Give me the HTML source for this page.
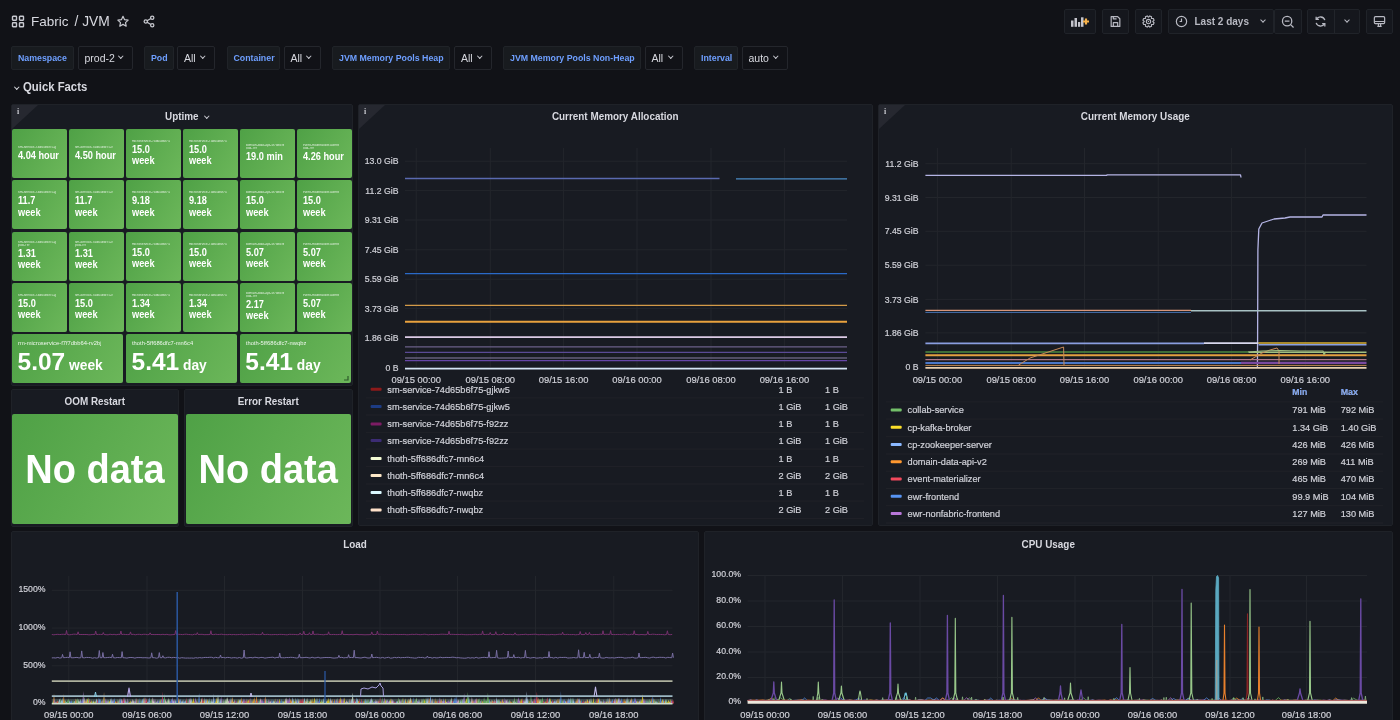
<!DOCTYPE html><html><head><meta charset="utf-8"><style>
*{box-sizing:border-box;margin:0;padding:0}
html,body{width:1400px;height:720px;overflow:hidden;background:#111217;}
.wrap{position:absolute;left:0;top:0;width:1400px;height:720px;will-change:transform;font-family:"Liberation Sans",sans-serif;color:#ccccdc}
.a{position:absolute}
.t{white-space:nowrap;line-height:1}
.panel{position:absolute;background:#181b22;border:1px solid #1f2228;border-radius:2px}
.ptitle{position:absolute;left:0;right:0;text-align:center;font-weight:bold;font-size:10.6px;color:#d8d9e0;white-space:nowrap;line-height:1;transform:scaleX(.934)}
.btn{position:absolute;top:9px;height:25px;background:#15171d;border:1px solid #202329;border-radius:2px}
.vlab{position:absolute;top:45.5px;height:24px;background:#181b1f;border:1px solid #202328;border-radius:2px;color:#6e9fff;font-weight:bold;font-size:8.8px;line-height:22px;white-space:nowrap}
.vval{position:absolute;top:45.5px;height:24px;background:#111217;border:1px solid #24262c;border-radius:2px;color:#d8d9e0;font-size:10.5px;line-height:22px;white-space:nowrap}
.chev{display:inline-block;width:4px;height:4px;border-right:1.2px solid #c8c9d0;border-bottom:1.2px solid #c8c9d0;transform:rotate(45deg);position:absolute}
.tile{position:absolute;border-radius:2px;background:linear-gradient(120deg,#4fa146,#6cb75a);overflow:hidden}
.tl{position:absolute;left:6px;font-size:3.4px;color:rgba(255,255,255,.8);white-space:nowrap;line-height:1;max-width:38px;overflow:hidden}
.tv{position:absolute;left:6px;font-size:10px;font-weight:bold;color:#fff;line-height:11.5px;white-space:nowrap;transform:scaleX(.92);transform-origin:0 0}
.info{position:absolute;left:0;top:0;width:0;height:0;border-top:24px solid #262830;border-right:26px solid transparent}
.infoi{position:absolute;left:5px;top:3px;font-size:8px;font-family:"Liberation Serif",serif;font-weight:bold;color:#c8c9d0;line-height:1}
.ax{position:absolute;font-size:8.7px;color:#d0d1d8;white-space:nowrap;line-height:1;-webkit-text-stroke:.2px #d0d1d8}
.xl{position:absolute;font-size:9.4px;color:#d0d1d8;-webkit-text-stroke:.2px #d0d1d8;white-space:nowrap;line-height:1;transform:translateX(-50%)}
.lg{position:absolute;font-size:9.2px;color:#d0d1d8;-webkit-text-stroke:.2px #d0d1d8;white-space:nowrap;line-height:1}
</style></head><body><div class="wrap">
<svg class="a" style="left:11px;top:15px" width="14" height="13" viewBox="0 0 14 13">
<g fill="none" stroke="#c8c9d0" stroke-width="1.4"><rect x="1.5" y="1.2" width="4" height="4" rx=".6"/><rect x="8.5" y="1.2" width="4" height="4" rx=".6"/><rect x="1.5" y="7.8" width="4" height="4" rx=".6"/><rect x="8.5" y="7.8" width="4" height="4" rx=".6"/></g></svg>
<div class="a t" style="left:31px;top:14.5px;font-size:13.5px;color:#d8d9e0">Fabric</div>
<div class="a t" style="left:74.5px;top:14.5px;font-size:13.8px;color:#d8d9e0">/ JVM</div>
<svg class="a" style="left:116px;top:15px" width="14" height="13" viewBox="0 0 24 24"><path d="M12 2.5l2.9 6.1 6.6.8-4.9 4.6 1.3 6.6L12 17.3l-5.9 3.3 1.3-6.6L2.5 9.4l6.6-.8z" fill="none" stroke="#c8c9d0" stroke-width="2.2" stroke-linejoin="round"/></svg>
<svg class="a" style="left:142px;top:15px" width="14" height="13" viewBox="0 0 24 24"><g fill="none" stroke="#c8c9d0" stroke-width="2.3"><circle cx="18" cy="5" r="3"/><circle cx="6" cy="12" r="3"/><circle cx="18" cy="19" r="3"/><path d="M8.6 13.5l6.8 4M15.4 6.5l-6.8 4"/></g></svg>
<div class="btn" style="left:1064px;width:32px"></div>
<svg class="a" style="left:1070px;top:14px" width="22" height="15" viewBox="0 0 22 15">
<g fill="#c4c4cc"><rect x="1" y="6.5" width="2.5" height="6.3"/><rect x="4.5" y="4" width="2.5" height="8.8"/><rect x="8" y="8" width="2.2" height="4.8"/><rect x="11" y="3.3" width="2.5" height="9.5"/></g>
<path d="M16 4.5v6M13 7.5h6" stroke="#f7b24a" stroke-width="2.2"/></svg>
<div class="btn" style="left:1102px;width:27px"></div>
<svg class="a" style="left:1109px;top:15px" width="13" height="13" viewBox="0 0 24 24"><g fill="none" stroke="#b8b9c2" stroke-width="2.2" stroke-linejoin="round"><path d="M4 3h12l4 4v14H4z"/><path d="M8 21v-7h8v7M8 3v4h6"/></g></svg>
<div class="btn" style="left:1135px;width:27px"></div>
<svg class="a" style="left:1142px;top:15px" width="13" height="13" viewBox="0 0 24 24"><g fill="none" stroke="#b8b9c2" stroke-width="2" stroke-linejoin="round"><circle cx="12" cy="12" r="4"/><path d="M19.90 12.26 L22.34 14.34 L20.97 17.65 L17.77 17.40 L17.40 17.77 L17.65 20.97 L14.34 22.34 L12.26 19.90 L11.74 19.90 L9.66 22.34 L6.35 20.97 L6.60 17.77 L6.23 17.40 L3.03 17.65 L1.66 14.34 L4.10 12.26 L4.10 11.74 L1.66 9.66 L3.03 6.35 L6.23 6.60 L6.60 6.23 L6.35 3.03 L9.66 1.66 L11.74 4.10 L12.26 4.10 L14.34 1.66 L17.65 3.03 L17.40 6.23 L17.77 6.60 L20.97 6.35 L22.34 9.66 L19.90 11.74Z"/></g><circle cx="12" cy="12" r="1.3" fill="#b8b9c2"/></svg>
<div class="btn" style="left:1168px;width:106px"></div>
<svg class="a" style="left:1175px;top:15px" width="13" height="13" viewBox="0 0 24 24"><g fill="none" stroke="#b8b9c2" stroke-width="2.2"><circle cx="12" cy="12" r="9.5"/><path d="M12 6.5V12H8.5"/></g></svg>
<div class="a t" style="left:1194.5px;top:16.5px;font-size:10px;font-weight:bold;color:#b8b9c2">Last 2 days</div>
<span class="chev" style="left:1261px;top:18px;border-color:#b8b9c2"></span>
<div class="btn" style="left:1274px;width:28px"></div>
<svg class="a" style="left:1281px;top:15px" width="14" height="14" viewBox="0 0 24 24"><g fill="none" stroke="#b8b9c2" stroke-width="2.2"><circle cx="10.5" cy="10.5" r="8"/><path d="M16.5 16.5l5 5M6.5 10.5h8"/></g></svg>
<div class="btn" style="left:1307px;width:53px"></div>
<div class="a" style="left:1334px;top:10px;width:1px;height:23px;background:#22252b"></div>
<svg class="a" style="left:1314px;top:15px" width="13" height="13" viewBox="0 0 24 24"><g fill="none" stroke="#b8b9c2" stroke-width="2.4"><path d="M20 9.5A8.5 8.5 0 0 0 4.5 8M4 14.5A8.5 8.5 0 0 0 19.5 16"/><path d="M4 3v5h5M20 21v-5h-5"/></g></svg>
<span class="chev" style="left:1345px;top:18px;border-color:#b8b9c2"></span>
<div class="btn" style="left:1366px;width:27px"></div>
<svg class="a" style="left:1373px;top:15px" width="13" height="13" viewBox="0 0 24 24"><g fill="none" stroke="#b8b9c2" stroke-width="2.2"><rect x="2.5" y="3" width="19" height="13" rx="2"/><path d="M2.5 12h19M8 21h8M10 16v5M14 16v5"/></g></svg>
<div class="vlab" style="left:11px;width:63px;padding-left:6px">Namespace</div>
<div class="vval" style="left:77.5px;width:55.5px;padding-left:6px">prod-2</div>
<span class="chev" style="left:119.0px;top:54px;width:3.5px;height:3.5px"></span>
<div class="vlab" style="left:144px;width:30px;padding-left:6px">Pod</div>
<div class="vval" style="left:177px;width:38px;padding-left:6px">All</div>
<span class="chev" style="left:201px;top:54px;width:3.5px;height:3.5px"></span>
<div class="vlab" style="left:226.5px;width:53px;padding-left:6px">Container</div>
<div class="vval" style="left:283.5px;width:37px;padding-left:6px">All</div>
<span class="chev" style="left:306.5px;top:54px;width:3.5px;height:3.5px"></span>
<div class="vlab" style="left:332px;width:118px;padding-left:6px">JVM Memory Pools Heap</div>
<div class="vval" style="left:454px;width:38px;padding-left:6px">All</div>
<span class="chev" style="left:478px;top:54px;width:3.5px;height:3.5px"></span>
<div class="vlab" style="left:503px;width:138px;padding-left:6px">JVM Memory Pools Non-Heap</div>
<div class="vval" style="left:644.5px;width:38px;padding-left:6px">All</div>
<span class="chev" style="left:668.5px;top:54px;width:3.5px;height:3.5px"></span>
<div class="vlab" style="left:694px;width:44px;padding-left:6px">Interval</div>
<div class="vval" style="left:741.5px;width:46px;padding-left:6px">auto</div>
<span class="chev" style="left:773.5px;top:54px;width:3.5px;height:3.5px"></span>
<span class="chev" style="left:15px;top:85px;width:3.5px;height:3.5px;border-color:#d8d9e0"></span>
<div class="a t" style="left:23px;top:81px;font-size:12.6px;font-weight:bold;color:#d8d9e0;transform:scaleX(.9);transform-origin:0 0">Quick Facts</div>
<div class="panel" style="left:11px;top:104px;width:341.5px;height:281.5px">
<div class="info"></div><div class="infoi">i</div>
<div class="ptitle" style="top:6.1px"></div>
</div>
<div class="a t" style="left:164.7px;top:110.6px;font-size:10.6px;font-weight:bold;color:#d8d9e0;transform:scaleX(.934);transform-origin:0 0">Uptime</div>
<span class="chev" style="left:204.5px;top:114px;width:3.5px;height:3.5px"></span>
<div class="panel" style="left:11px;top:389px;width:167.5px;height:138px">
<div class="ptitle" style="top:6.1px">OOM Restart</div>
</div>
<div class="panel" style="left:184px;top:389px;width:168.5px;height:138px">
<div class="ptitle" style="top:6.1px">Error Restart</div>
</div>
<div class="panel" style="left:358px;top:104px;width:514.5px;height:422px">
<div class="info"></div><div class="infoi">i</div>
<div class="ptitle" style="top:6.1px">Current Memory Allocation</div>
</div>
<div class="panel" style="left:878px;top:104px;width:514.5px;height:422px">
<div class="info"></div><div class="infoi">i</div>
<div class="ptitle" style="top:6.1px">Current Memory Usage</div>
</div>
<div class="panel" style="left:11px;top:531px;width:688px;height:209px">
<div class="ptitle" style="top:6.6px">Load</div>
</div>
<div class="panel" style="left:704px;top:531px;width:688.5px;height:209px">
<div class="ptitle" style="top:6.6px">CPU Usage</div>
</div>
<div class="tile" style="left:12px;top:128.5px;width:55px;height:49.2px">
<div class="tl" style="top:17.20px">sm-service-74d65b6f75-gjkw5</div>
<div class="tv" style="top:21.2px">4.04 hour</div>
</div>
<div class="tile" style="left:68.9px;top:128.5px;width:55px;height:49.2px">
<div class="tl" style="top:17.20px">sm-service-74d65b6f75-f92zz</div>
<div class="tv" style="top:21.2px">4.50 hour</div>
</div>
<div class="tile" style="left:125.8px;top:128.5px;width:55px;height:49.2px">
<div class="tl" style="top:11.30px">microservice-74d65b6f75-gj</div>
<div class="tv" style="top:15.3px">15.0<br>week</div>
</div>
<div class="tile" style="left:182.7px;top:128.5px;width:55px;height:49.2px">
<div class="tl" style="top:11.30px">microservice-74d65b6f75-f9</div>
<div class="tv" style="top:15.3px">15.0<br>week</div>
</div>
<div class="tile" style="left:239.6px;top:128.5px;width:55px;height:49.2px">
<div class="tl" style="top:15.70px">domain-data-api-5f7d8c9b</div>
<div class="tl" style="top:18.80px">pod-7f9</div>
<div class="tv" style="top:22.8px">19.0 min</div>
</div>
<div class="tile" style="left:296.5px;top:128.5px;width:55px;height:49.2px">
<div class="tl" style="top:15.70px">event-materializer-6d9f8</div>
<div class="tl" style="top:18.80px">pod-7f9</div>
<div class="tv" style="top:22.8px">4.26 hour</div>
</div>
<div class="tile" style="left:12px;top:180px;width:55px;height:49.2px">
<div class="tl" style="top:11.30px">sm-service-74d65b6f75-gjkw5</div>
<div class="tv" style="top:15.3px">11.7<br>week</div>
</div>
<div class="tile" style="left:68.9px;top:180px;width:55px;height:49.2px">
<div class="tl" style="top:11.30px">sm-service-74d65b6f75-f92zz</div>
<div class="tv" style="top:15.3px">11.7<br>week</div>
</div>
<div class="tile" style="left:125.8px;top:180px;width:55px;height:49.2px">
<div class="tl" style="top:11.30px">microservice-74d65b6f75-gj</div>
<div class="tv" style="top:15.3px">9.18<br>week</div>
</div>
<div class="tile" style="left:182.7px;top:180px;width:55px;height:49.2px">
<div class="tl" style="top:11.30px">microservice-74d65b6f75-f9</div>
<div class="tv" style="top:15.3px">9.18<br>week</div>
</div>
<div class="tile" style="left:239.6px;top:180px;width:55px;height:49.2px">
<div class="tl" style="top:11.30px">domain-data-api-5f7d8c9b</div>
<div class="tv" style="top:15.3px">15.0<br>week</div>
</div>
<div class="tile" style="left:296.5px;top:180px;width:55px;height:49.2px">
<div class="tl" style="top:11.30px">event-materializer-6d9f8</div>
<div class="tv" style="top:15.3px">15.0<br>week</div>
</div>
<div class="tile" style="left:12px;top:231.5px;width:55px;height:49.2px">
<div class="tl" style="top:9.20px">sm-service-74d65b6f75-gjkw5</div>
<div class="tl" style="top:12.30px">pod-7f9</div>
<div class="tv" style="top:16.3px">1.31<br>week</div>
</div>
<div class="tile" style="left:68.9px;top:231.5px;width:55px;height:49.2px">
<div class="tl" style="top:9.20px">sm-service-74d65b6f75-f92zz</div>
<div class="tl" style="top:12.30px">pod-7f9</div>
<div class="tv" style="top:16.3px">1.31<br>week</div>
</div>
<div class="tile" style="left:125.8px;top:231.5px;width:55px;height:49.2px">
<div class="tl" style="top:11.30px">microservice-74d65b6f75-gj</div>
<div class="tv" style="top:15.3px">15.0<br>week</div>
</div>
<div class="tile" style="left:182.7px;top:231.5px;width:55px;height:49.2px">
<div class="tl" style="top:11.30px">microservice-74d65b6f75-f9</div>
<div class="tv" style="top:15.3px">15.0<br>week</div>
</div>
<div class="tile" style="left:239.6px;top:231.5px;width:55px;height:49.2px">
<div class="tl" style="top:11.30px">domain-data-api-5f7d8c9b</div>
<div class="tv" style="top:15.3px">5.07<br>week</div>
</div>
<div class="tile" style="left:296.5px;top:231.5px;width:55px;height:49.2px">
<div class="tl" style="top:11.30px">event-materializer-6d9f8</div>
<div class="tv" style="top:15.3px">5.07<br>week</div>
</div>
<div class="tile" style="left:12px;top:282.5px;width:55px;height:49.2px">
<div class="tl" style="top:11.30px">sm-service-74d65b6f75-gjkw5</div>
<div class="tv" style="top:15.3px">15.0<br>week</div>
</div>
<div class="tile" style="left:68.9px;top:282.5px;width:55px;height:49.2px">
<div class="tl" style="top:11.30px">sm-service-74d65b6f75-f92zz</div>
<div class="tv" style="top:15.3px">15.0<br>week</div>
</div>
<div class="tile" style="left:125.8px;top:282.5px;width:55px;height:49.2px">
<div class="tl" style="top:11.30px">microservice-74d65b6f75-gj</div>
<div class="tv" style="top:15.3px">1.34<br>week</div>
</div>
<div class="tile" style="left:182.7px;top:282.5px;width:55px;height:49.2px">
<div class="tl" style="top:11.30px">microservice-74d65b6f75-f9</div>
<div class="tv" style="top:15.3px">1.34<br>week</div>
</div>
<div class="tile" style="left:239.6px;top:282.5px;width:55px;height:49.2px">
<div class="tl" style="top:9.20px">domain-data-api-5f7d8c9b</div>
<div class="tl" style="top:12.30px">pod-7f9</div>
<div class="tv" style="top:16.3px">2.17<br>week</div>
</div>
<div class="tile" style="left:296.5px;top:282.5px;width:55px;height:49.2px">
<div class="tl" style="top:11.30px">event-materializer-6d9f8</div>
<div class="tv" style="top:15.3px">5.07<br>week</div>
</div>
<div class="tile" style="left:12px;top:333.5px;width:111.4px;height:49px">
<div class="tl" style="top:7px;font-size:5.8px;color:rgba(255,255,255,.9);max-width:none">rm-microservice-f7f7dbb64-rv2bj</div>
<div class="tv" style="top:17.5px;left:5.5px;font-size:24.5px;line-height:22px;transform:none">5.07<span style="font-size:13.8px"> week</span></div>
</div>
<div class="tile" style="left:126px;top:333.5px;width:111.3px;height:49px">
<div class="tl" style="top:7px;font-size:5.8px;color:rgba(255,255,255,.9);max-width:none">thoth-5ff686dfc7-mn6c4</div>
<div class="tv" style="top:17.5px;left:5.5px;font-size:24.5px;line-height:22px;transform:none">5.41<span style="font-size:13.8px"> day</span></div>
</div>
<div class="tile" style="left:239.8px;top:333.5px;width:111.5px;height:49px">
<div class="tl" style="top:7px;font-size:5.8px;color:rgba(255,255,255,.9);max-width:none">thoth-5ff686dfc7-nwqbz</div>
<div class="tv" style="top:17.5px;left:5.5px;font-size:24.5px;line-height:22px;transform:none">5.41<span style="font-size:13.8px"> day</span></div>
</div>
<svg class="a" style="left:343px;top:375px" width="6" height="6"><path d="M5 1v4H1" fill="none" stroke="#2d5a2a" stroke-width="1.2"/></svg>
<div class="tile" style="left:12px;top:413.8px;width:165.8px;height:110.6px">
<div class="t" style="position:absolute;left:0;right:0;top:36px;text-align:center;font-size:38px;font-weight:bold;color:#fff;line-height:38px;transform:scaleY(1.08)">No data</div>
</div>
<div class="tile" style="left:185.5px;top:413.8px;width:165.5px;height:110.6px">
<div class="t" style="position:absolute;left:0;right:0;top:36px;text-align:center;font-size:38px;font-weight:bold;color:#fff;line-height:38px;transform:scaleY(1.08)">No data</div>
</div>
<div class="ax" style="right:1001.5px;top:157.29999999999998px">13.0 GiB</div>
<div class="ax" style="right:1001.5px;top:186.7px">11.2 GiB</div>
<div class="ax" style="right:1001.5px;top:216.1px">9.31 GiB</div>
<div class="ax" style="right:1001.5px;top:245.9px">7.45 GiB</div>
<div class="ax" style="right:1001.5px;top:275.3px">5.59 GiB</div>
<div class="ax" style="right:1001.5px;top:304.70000000000005px">3.73 GiB</div>
<div class="ax" style="right:1001.5px;top:333.70000000000005px">1.86 GiB</div>
<div class="ax" style="right:1001.5px;top:363.5px">0 B</div>
<div class="xl" style="left:416.2px;top:374.7px">09/15 00:00</div>
<div class="xl" style="left:490.3px;top:374.7px">09/15 08:00</div>
<div class="xl" style="left:563.6px;top:374.7px">09/15 16:00</div>
<div class="xl" style="left:637px;top:374.7px">09/16 00:00</div>
<div class="xl" style="left:711px;top:374.7px">09/16 08:00</div>
<div class="xl" style="left:784.4px;top:374.7px">09/16 16:00</div>
<div class="lg" style="left:387.3px;top:385.5px">sm-service-74d65b6f75-gjkw5</div>
<div class="lg" style="left:778.5px;top:385.5px">1 B</div>
<div class="lg" style="left:825px;top:385.5px">1 B</div>
<div class="lg" style="left:387.3px;top:402.59999999999997px">sm-service-74d65b6f75-gjkw5</div>
<div class="lg" style="left:778.5px;top:402.59999999999997px">1 GiB</div>
<div class="lg" style="left:825px;top:402.59999999999997px">1 GiB</div>
<div class="lg" style="left:387.3px;top:420.09999999999997px">sm-service-74d65b6f75-f92zz</div>
<div class="lg" style="left:778.5px;top:420.09999999999997px">1 B</div>
<div class="lg" style="left:825px;top:420.09999999999997px">1 B</div>
<div class="lg" style="left:387.3px;top:436.8px">sm-service-74d65b6f75-f92zz</div>
<div class="lg" style="left:778.5px;top:436.8px">1 GiB</div>
<div class="lg" style="left:825px;top:436.8px">1 GiB</div>
<div class="lg" style="left:387.3px;top:454.59999999999997px">thoth-5ff686dfc7-mn6c4</div>
<div class="lg" style="left:778.5px;top:454.59999999999997px">1 B</div>
<div class="lg" style="left:825px;top:454.59999999999997px">1 B</div>
<div class="lg" style="left:387.3px;top:471.7px">thoth-5ff686dfc7-mn6c4</div>
<div class="lg" style="left:778.5px;top:471.7px">2 GiB</div>
<div class="lg" style="left:825px;top:471.7px">2 GiB</div>
<div class="lg" style="left:387.3px;top:488.8px">thoth-5ff686dfc7-nwqbz</div>
<div class="lg" style="left:778.5px;top:488.8px">1 B</div>
<div class="lg" style="left:825px;top:488.8px">1 B</div>
<div class="lg" style="left:387.3px;top:506.2px">thoth-5ff686dfc7-nwqbz</div>
<div class="lg" style="left:778.5px;top:506.2px">2 GiB</div>
<div class="lg" style="left:825px;top:506.2px">2 GiB</div>
<div class="ax" style="right:481.5px;top:159.79999999999998px">11.2 GiB</div>
<div class="ax" style="right:481.5px;top:193.6px">9.31 GiB</div>
<div class="ax" style="right:481.5px;top:227.4px">7.45 GiB</div>
<div class="ax" style="right:481.5px;top:261.3px">5.59 GiB</div>
<div class="ax" style="right:481.5px;top:295.5px">3.73 GiB</div>
<div class="ax" style="right:481.5px;top:329.0px">1.86 GiB</div>
<div class="ax" style="right:481.5px;top:363.20000000000005px">0 B</div>
<div class="xl" style="left:937.4px;top:374.7px">09/15 00:00</div>
<div class="xl" style="left:1011.2px;top:374.7px">09/15 08:00</div>
<div class="xl" style="left:1084.5px;top:374.7px">09/15 16:00</div>
<div class="xl" style="left:1158.2px;top:374.7px">09/16 00:00</div>
<div class="xl" style="left:1231.6px;top:374.7px">09/16 08:00</div>
<div class="xl" style="left:1305.3px;top:374.7px">09/16 16:00</div>
<div class="lg" style="left:1292.3px;top:388px;color:#6e9fff;font-weight:bold;font-size:8.7px">Min</div>
<div class="lg" style="left:1340.7px;top:388px;color:#6e9fff;font-weight:bold;font-size:8.9px">Max</div>
<div class="lg" style="left:907.6px;top:406.3px">collab-service</div>
<div class="lg" style="left:1292.3px;top:406.3px">791 MiB</div>
<div class="lg" style="left:1340.7px;top:406.3px">792 MiB</div>
<div class="lg" style="left:907.6px;top:423.5px">cp-kafka-broker</div>
<div class="lg" style="left:1292.3px;top:423.5px">1.34 GiB</div>
<div class="lg" style="left:1340.7px;top:423.5px">1.40 GiB</div>
<div class="lg" style="left:907.6px;top:440.8px">cp-zookeeper-server</div>
<div class="lg" style="left:1292.3px;top:440.8px">426 MiB</div>
<div class="lg" style="left:1340.7px;top:440.8px">426 MiB</div>
<div class="lg" style="left:907.6px;top:458.0px">domain-data-api-v2</div>
<div class="lg" style="left:1292.3px;top:458.0px">269 MiB</div>
<div class="lg" style="left:1340.7px;top:458.0px">411 MiB</div>
<div class="lg" style="left:907.6px;top:475.2px">event-materializer</div>
<div class="lg" style="left:1292.3px;top:475.2px">465 MiB</div>
<div class="lg" style="left:1340.7px;top:475.2px">470 MiB</div>
<div class="lg" style="left:907.6px;top:492.5px">ewr-frontend</div>
<div class="lg" style="left:1292.3px;top:492.5px">99.9 MiB</div>
<div class="lg" style="left:1340.7px;top:492.5px">104 MiB</div>
<div class="lg" style="left:907.6px;top:509.7px">ewr-nonfabric-frontend</div>
<div class="lg" style="left:1292.3px;top:509.7px">127 MiB</div>
<div class="lg" style="left:1340.7px;top:509.7px">130 MiB</div>
<div class="ax" style="right:1354.5px;top:585.0px">1500%</div>
<div class="ax" style="right:1354.5px;top:622.8000000000001px">1000%</div>
<div class="ax" style="right:1354.5px;top:660.5px">500%</div>
<div class="ax" style="right:1354.5px;top:698.0px">0%</div>
<div class="xl" style="left:68.75px;top:709.8000000000001px">09/15 00:00</div>
<div class="xl" style="left:147px;top:709.8000000000001px">09/15 06:00</div>
<div class="xl" style="left:224.5px;top:709.8000000000001px">09/15 12:00</div>
<div class="xl" style="left:302.5px;top:709.8000000000001px">09/15 18:00</div>
<div class="xl" style="left:380px;top:709.8000000000001px">09/16 00:00</div>
<div class="xl" style="left:457.5px;top:709.8000000000001px">09/16 06:00</div>
<div class="xl" style="left:535.5px;top:709.8000000000001px">09/16 12:00</div>
<div class="xl" style="left:613.75px;top:709.8000000000001px">09/16 18:00</div>
<div class="ax" style="right:659px;top:570.4px">100.0%</div>
<div class="ax" style="right:659px;top:595.9px">80.0%</div>
<div class="ax" style="right:659px;top:621.4px">60.0%</div>
<div class="ax" style="right:659px;top:646.9px">40.0%</div>
<div class="ax" style="right:659px;top:672.4px">20.0%</div>
<div class="ax" style="right:659px;top:697.4px">0%</div>
<div class="xl" style="left:765px;top:709.8000000000001px">09/15 00:00</div>
<div class="xl" style="left:842.5px;top:709.8000000000001px">09/15 06:00</div>
<div class="xl" style="left:920px;top:709.8000000000001px">09/15 12:00</div>
<div class="xl" style="left:997.5px;top:709.8000000000001px">09/15 18:00</div>
<div class="xl" style="left:1075px;top:709.8000000000001px">09/16 00:00</div>
<div class="xl" style="left:1152.5px;top:709.8000000000001px">09/16 06:00</div>
<div class="xl" style="left:1230px;top:709.8000000000001px">09/16 12:00</div>
<div class="xl" style="left:1306.5px;top:709.8000000000001px">09/16 18:00</div>
<svg class="a" style="left:0;top:0" width="1400" height="720"><path d="M405.0 161.2H847.0" stroke="#23262c" stroke-width="1" opacity="1"/><path d="M405.0 190.6H847.0" stroke="#23262c" stroke-width="1" opacity="1"/><path d="M405.0 220.0H847.0" stroke="#23262c" stroke-width="1" opacity="1"/><path d="M405.0 249.8H847.0" stroke="#23262c" stroke-width="1" opacity="1"/><path d="M405.0 279.2H847.0" stroke="#23262c" stroke-width="1" opacity="1"/><path d="M405.0 308.6H847.0" stroke="#23262c" stroke-width="1" opacity="1"/><path d="M405.0 337.6H847.0" stroke="#23262c" stroke-width="1" opacity="1"/><path d="M405.0 367.4H847.0" stroke="#23262c" stroke-width="1" opacity="1"/><path d="M416.2 148.0V368.0" stroke="#23262c" stroke-width="1"/><path d="M490.3 148.0V368.0" stroke="#23262c" stroke-width="1"/><path d="M563.6 148.0V368.0" stroke="#23262c" stroke-width="1"/><path d="M637.0 148.0V368.0" stroke="#23262c" stroke-width="1"/><path d="M711.0 148.0V368.0" stroke="#23262c" stroke-width="1"/><path d="M784.4 148.0V368.0" stroke="#23262c" stroke-width="1"/><path d="M405.0 178.5H719.5" stroke="#5a6ab0" stroke-width="1.3" opacity="1"/><path d="M736.0 178.8H847.0" stroke="#4a8cc6" stroke-width="1.3" opacity="1"/><path d="M405.0 273.6H847.0" stroke="#2a6ac8" stroke-width="1.3" opacity="1"/><path d="M405.0 305.3H847.0" stroke="#d39a48" stroke-width="1.3" opacity="1"/><path d="M405.0 321.8H847.0" stroke="#e9a23e" stroke-width="2" opacity="1"/><path d="M405.0 337.1H847.0" stroke="#dccbe6" stroke-width="1.6" opacity="1"/><path d="M405.0 346.9H847.0" stroke="#6a6088" stroke-width="1.1" opacity="1"/><path d="M405.0 352.4H847.0" stroke="#5a4a96" stroke-width="1.3" opacity="1"/><path d="M405.0 358.0H847.0" stroke="#8a80a8" stroke-width="1.1" opacity="1"/><path d="M405.0 360.6H847.0" stroke="#6646a8" stroke-width="1.3" opacity="1"/><path d="M405.0 368.6H847.0" stroke="#d4e4f4" stroke-width="1.6" opacity="1"/><rect x="370.6" y="387.8" width="11" height="3" rx="1" fill="#8c1a1a"/><rect x="370.6" y="404.9" width="11" height="3" rx="1" fill="#1d3c84"/><rect x="370.6" y="422.4" width="11" height="3" rx="1" fill="#7c1c64"/><rect x="370.6" y="439.1" width="11" height="3" rx="1" fill="#3c2c74"/><rect x="370.6" y="456.9" width="11" height="3" rx="1" fill="#f2fad4"/><rect x="370.6" y="474.0" width="11" height="3" rx="1" fill="#fde8c8"/><rect x="370.6" y="491.1" width="11" height="3" rx="1" fill="#daf8ff"/><rect x="370.6" y="508.5" width="11" height="3" rx="1" fill="#ffe2ca"/><path d="M366.0 397.9H864.0" stroke="#202228" stroke-width="1" opacity="1"/><path d="M366.0 415.0H864.0" stroke="#202228" stroke-width="1" opacity="1"/><path d="M366.0 432.4H864.0" stroke="#202228" stroke-width="1" opacity="1"/><path d="M366.0 449.1H864.0" stroke="#202228" stroke-width="1" opacity="1"/><path d="M366.0 466.6H864.0" stroke="#202228" stroke-width="1" opacity="1"/><path d="M366.0 484.0H864.0" stroke="#202228" stroke-width="1" opacity="1"/><path d="M366.0 501.1H864.0" stroke="#202228" stroke-width="1" opacity="1"/><path d="M366.0 518.6H864.0" stroke="#202228" stroke-width="1" opacity="1"/><path d="M925.4 163.7H1366.5" stroke="#23262c" stroke-width="1" opacity="1"/><path d="M925.4 197.5H1366.5" stroke="#23262c" stroke-width="1" opacity="1"/><path d="M925.4 231.3H1366.5" stroke="#23262c" stroke-width="1" opacity="1"/><path d="M925.4 265.2H1366.5" stroke="#23262c" stroke-width="1" opacity="1"/><path d="M925.4 299.4H1366.5" stroke="#23262c" stroke-width="1" opacity="1"/><path d="M925.4 332.9H1366.5" stroke="#23262c" stroke-width="1" opacity="1"/><path d="M925.4 367.1H1366.5" stroke="#23262c" stroke-width="1" opacity="1"/><path d="M937.4 148.0V368.0" stroke="#23262c" stroke-width="1"/><path d="M1011.2 148.0V368.0" stroke="#23262c" stroke-width="1"/><path d="M1084.5 148.0V368.0" stroke="#23262c" stroke-width="1"/><path d="M1158.2 148.0V368.0" stroke="#23262c" stroke-width="1"/><path d="M1231.6 148.0V368.0" stroke="#23262c" stroke-width="1"/><path d="M1305.3 148.0V368.0" stroke="#23262c" stroke-width="1"/><path d="M925.4 175.3 L1106.7 175.3 L1107.0 174.8 L1240.5 174.8 L1241.0 177.5" fill="none" stroke="#b4b4e4" stroke-width="1.3" opacity="1" stroke-linejoin="round"/><path d="M1257.4 367.0 L1257.6 340.0 L1257.9 250.0 L1258.8 229.0 L1262.0 223.0 L1268.0 221.0 L1274.0 219.0 L1285.0 218.0 L1290.0 217.0 L1322.0 217.0 L1323.0 215.0 L1366.5 215.0" fill="none" stroke="#b4b4e4" stroke-width="1.3" opacity="1" stroke-linejoin="round"/><path d="M925.4 310.4H1191.0" stroke="#d8967a" stroke-width="1.1" opacity="1"/><path d="M1191.0 310.8H1366.5" stroke="#a8c2c4" stroke-width="1.6" opacity="1"/><path d="M925.4 312.4H1191.0" stroke="#4672b0" stroke-width="1.0" opacity="1"/><path d="M925.4 343.4H1204.0" stroke="#8a9ee0" stroke-width="1.8" opacity="1"/><path d="M1204.0 343.2H1258.6" stroke="#d8d8ee" stroke-width="1.8" opacity="1"/><path d="M1258.6 343.0H1366.5" stroke="#d8b030" stroke-width="1.6" opacity="1"/><path d="M1258.6 344.8H1366.5" stroke="#8aa0e0" stroke-width="1.6" opacity="1"/><path d="M925.4 352.0H1249.0" stroke="#4a8a40" stroke-width="1.3" opacity="1"/><path d="M1249.0 352.3H1366.5" stroke="#a0c080" stroke-width="1.4" opacity="1"/><path d="M925.4 355.2H1366.5" stroke="#e4a040" stroke-width="2.0" opacity="1"/><path d="M925.4 359.6H1366.5" stroke="#b07888" stroke-width="1.1" opacity="1"/><path d="M925.4 362.9H1241.0" stroke="#4a78c8" stroke-width="2.0" opacity="1"/><path d="M1241.0 362.9H1366.5" stroke="#7a4aa0" stroke-width="2.2" opacity="1"/><path d="M925.4 365.4H1366.5" stroke="#c08850" stroke-width="1.0" opacity="1"/><path d="M925.4 367.9H1366.5" stroke="#e8d0b0" stroke-width="1.8" opacity="1"/><path d="M1018.6 365.0 L1030.0 358.0 L1063.6 347.0 L1064.0 365.0" fill="none" stroke="#c88a5a" stroke-width="1.0" opacity="1" stroke-linejoin="round"/><path d="M1250.0 360.0 L1262.0 353.0 L1270.0 350.0 L1277.0 348.0 L1279.0 351.0 L1279.0 364.0" fill="none" stroke="#c88a5a" stroke-width="1.0" opacity="1" stroke-linejoin="round"/><path d="M1248.0 352.0 L1262.0 351.0 L1280.0 350.5 L1300.0 351.0 L1323.0 351.0 L1324.0 354.5 L1326.0 352.0" fill="none" stroke="#a0c080" stroke-width="1.1" opacity="1" stroke-linejoin="round"/><rect x="890.7" y="408.6" width="11" height="3" rx="1" fill="#73bf69"/><rect x="890.7" y="425.8" width="11" height="3" rx="1" fill="#fade2a"/><rect x="890.7" y="443.1" width="11" height="3" rx="1" fill="#8ab8ff"/><rect x="890.7" y="460.3" width="11" height="3" rx="1" fill="#ff9830"/><rect x="890.7" y="477.5" width="11" height="3" rx="1" fill="#f2495c"/><rect x="890.7" y="494.8" width="11" height="3" rx="1" fill="#5794f2"/><rect x="890.7" y="512.0" width="11" height="3" rx="1" fill="#b877d9"/><path d="M886.0 401.9H1383.0" stroke="#202228" stroke-width="1" opacity="1"/><path d="M886.0 419.1H1383.0" stroke="#202228" stroke-width="1" opacity="1"/><path d="M886.0 436.7H1383.0" stroke="#202228" stroke-width="1" opacity="1"/><path d="M886.0 454.0H1383.0" stroke="#202228" stroke-width="1" opacity="1"/><path d="M886.0 471.2H1383.0" stroke="#202228" stroke-width="1" opacity="1"/><path d="M886.0 488.5H1383.0" stroke="#202228" stroke-width="1" opacity="1"/><path d="M886.0 505.7H1383.0" stroke="#202228" stroke-width="1" opacity="1"/><path d="M886.0 523.0H1383.0" stroke="#202228" stroke-width="1" opacity="1"/><path d="M51.8 590.3H672.5" stroke="#23262c" stroke-width="1" opacity="1"/><path d="M51.8 628.1H672.5" stroke="#23262c" stroke-width="1" opacity="1"/><path d="M51.8 665.8H672.5" stroke="#23262c" stroke-width="1" opacity="1"/><path d="M51.8 703.3H672.5" stroke="#23262c" stroke-width="1" opacity="1"/><path d="M68.8 576.0V703.0" stroke="#23262c" stroke-width="1"/><path d="M147.0 576.0V703.0" stroke="#23262c" stroke-width="1"/><path d="M224.5 576.0V703.0" stroke="#23262c" stroke-width="1"/><path d="M302.5 576.0V703.0" stroke="#23262c" stroke-width="1"/><path d="M380.0 576.0V703.0" stroke="#23262c" stroke-width="1"/><path d="M457.5 576.0V703.0" stroke="#23262c" stroke-width="1"/><path d="M535.5 576.0V703.0" stroke="#23262c" stroke-width="1"/><path d="M613.8 576.0V703.0" stroke="#23262c" stroke-width="1"/><path d="M51.8 634.5 L53.8 634.8 L55.8 634.5 L57.8 634.3 L59.8 634.6 L61.8 634.3 L63.8 634.3 L65.8 634.5 L66.5 630.5 L67.3 634.5 L69.3 634.8 L71.3 634.6 L73.3 634.2 L75.3 634.2 L77.3 634.5 L78.1 631.8 L78.9 634.5 L80.9 634.5 L82.9 634.5 L84.9 634.5 L86.9 634.5 L88.9 634.8 L90.9 634.7 L92.9 634.4 L94.9 634.5 L95.7 631.1 L96.5 634.5 L98.5 634.4 L100.5 634.4 L102.5 634.5 L103.3 632.5 L104.1 634.5 L106.1 634.7 L108.1 634.8 L110.1 634.2 L112.1 634.7 L114.1 634.3 L116.1 634.8 L118.1 634.3 L120.1 634.5 L120.9 631.0 L121.7 634.5 L123.7 634.3 L125.7 634.5 L127.7 634.6 L129.7 634.5 L130.5 631.9 L131.3 634.5 L133.3 634.3 L135.3 634.8 L137.3 634.4 L139.3 634.3 L141.3 634.7 L143.3 634.3 L145.3 634.3 L147.3 634.7 L149.3 634.5 L150.1 632.8 L150.9 634.5 L152.9 634.5 L154.9 634.6 L156.9 634.5 L158.9 634.5 L160.9 634.7 L162.9 634.3 L164.9 634.7 L166.9 634.3 L168.9 634.8 L170.9 634.8 L172.9 634.6 L174.9 634.5 L175.7 630.6 L176.5 634.5 L178.5 634.3 L180.5 634.4 L182.5 634.6 L184.5 634.3 L186.5 634.2 L188.5 634.5 L190.5 634.6 L192.5 634.8 L194.5 634.2 L196.5 634.5 L197.3 632.6 L198.1 634.5 L200.1 634.4 L202.1 634.3 L204.1 634.7 L206.1 634.6 L208.1 634.6 L210.1 634.5 L210.9 630.7 L211.7 634.5 L213.7 634.6 L215.7 634.2 L217.7 634.5 L219.7 634.4 L221.7 634.2 L223.7 634.6 L225.7 634.6 L227.7 634.7 L229.7 634.4 L231.7 634.7 L233.7 634.5 L235.7 634.7 L237.7 634.6 L239.7 634.5 L241.7 634.2 L243.7 634.8 L245.7 634.6 L247.7 634.6 L249.7 634.5 L251.7 634.3 L253.7 634.2 L255.7 634.5 L257.7 634.6 L259.7 634.6 L261.7 634.5 L262.5 632.2 L263.3 634.5 L265.3 634.6 L267.3 634.3 L269.3 634.6 L271.3 634.7 L273.3 634.6 L275.3 634.5 L277.3 634.7 L279.3 634.4 L281.3 634.4 L283.3 634.5 L285.3 634.7 L287.3 634.8 L289.3 634.3 L291.3 634.4 L293.3 634.4 L295.3 634.5 L297.3 634.7 L299.3 634.5 L300.1 632.9 L300.9 634.5 L302.9 634.5 L303.8 631.2 L304.6 634.5 L306.6 634.5 L308.6 634.5 L309.4 632.7 L310.2 634.5 L312.2 634.5 L313.0 630.9 L313.8 634.5 L315.8 634.3 L317.8 634.2 L319.8 634.5 L321.8 634.6 L323.8 634.8 L325.8 634.3 L327.8 634.5 L328.6 631.8 L329.4 634.5 L331.4 634.6 L333.4 634.4 L335.4 634.6 L337.4 634.6 L339.4 634.4 L341.4 634.5 L342.2 630.7 L343.0 634.5 L345.0 634.6 L347.0 634.5 L349.0 634.7 L351.0 634.5 L353.0 634.7 L355.0 634.5 L357.0 634.3 L359.0 634.7 L361.0 634.6 L363.0 634.7 L365.0 634.8 L367.0 634.7 L369.0 634.7 L371.0 634.5 L371.8 631.9 L372.6 634.5 L374.6 634.5 L376.6 634.5 L377.4 631.0 L378.2 634.5 L380.2 634.2 L382.2 634.3 L384.2 634.7 L386.2 634.3 L388.2 634.6 L390.2 634.6 L392.2 634.5 L394.2 634.3 L396.2 634.5 L398.2 634.6 L400.2 634.5 L402.2 634.5 L404.2 634.4 L406.2 634.7 L408.2 634.7 L410.2 634.5 L412.2 634.3 L414.2 634.5 L416.2 634.2 L418.2 634.5 L420.2 634.7 L422.2 634.5 L424.2 634.2 L426.2 634.4 L428.2 634.8 L430.2 634.5 L432.2 634.5 L434.2 634.7 L436.2 634.4 L438.2 634.6 L440.2 634.3 L442.2 634.2 L444.2 634.3 L446.2 634.4 L448.2 634.5 L449.0 631.2 L449.8 634.5 L451.8 634.3 L453.8 634.4 L455.8 634.5 L457.8 634.4 L459.8 634.5 L461.8 634.3 L463.8 634.6 L465.8 634.7 L467.8 634.7 L469.8 634.6 L471.8 634.7 L473.8 634.4 L475.8 634.3 L477.8 634.7 L479.8 634.3 L481.8 634.5 L482.6 630.9 L483.4 634.5 L485.4 634.5 L487.4 634.3 L489.4 634.5 L490.2 632.5 L491.0 634.5 L493.0 634.6 L495.0 634.5 L495.8 631.7 L496.6 634.5 L498.6 634.7 L500.6 634.6 L502.6 634.5 L503.4 632.9 L504.2 634.5 L506.2 634.5 L508.2 634.5 L510.2 634.3 L512.2 634.7 L514.2 634.5 L515.0 632.8 L515.8 634.5 L517.8 634.8 L519.8 634.7 L521.8 634.5 L523.8 634.5 L525.8 634.2 L527.8 634.7 L529.8 634.5 L531.8 634.4 L533.8 634.3 L535.8 634.2 L537.8 634.7 L539.8 634.7 L541.8 634.4 L543.8 634.5 L545.8 634.7 L547.8 634.7 L549.8 634.7 L551.8 634.4 L553.8 634.7 L555.8 634.7 L557.8 634.4 L559.8 634.2 L561.8 634.5 L562.6 632.1 L563.4 634.5 L565.4 634.6 L567.4 634.3 L569.4 634.6 L571.4 634.6 L573.4 634.5 L575.4 634.8 L577.4 634.6 L579.4 634.5 L580.2 631.5 L581.0 634.5 L583.0 634.6 L585.0 634.5 L585.8 632.5 L586.6 634.5 L588.6 634.5 L589.4 632.4 L590.2 634.5 L592.2 634.7 L594.2 634.5 L596.2 634.5 L598.2 634.6 L600.2 634.2 L602.2 634.5 L603.0 630.7 L603.8 634.5 L605.8 634.3 L607.8 634.3 L609.8 634.5 L610.6 630.6 L611.4 634.5 L613.4 634.5 L615.4 634.6 L617.4 634.4 L619.4 634.5 L621.4 634.6 L623.4 634.2 L625.4 634.2 L627.4 634.7 L629.4 634.7 L631.4 634.2 L633.4 634.5 L634.2 630.7 L635.0 634.5 L637.0 634.5 L639.0 634.8 L641.0 634.5 L643.0 634.6 L645.0 634.8 L647.0 634.5 L647.8 631.4 L648.6 634.5 L650.6 634.5 L652.6 634.2 L654.6 634.3 L656.6 634.6 L658.6 634.4 L660.6 634.5 L662.6 634.5 L664.6 634.8 L666.6 634.5 L667.4 630.8 L668.2 634.5 L670.2 634.7 L672.2 634.4" fill="none" stroke="#74306c" stroke-width="1.0" opacity="1" stroke-linejoin="round"/><path d="M51.8 657.9 L53.8 657.8 L55.8 658.0 L57.8 657.4 L59.8 658.1 L61.8 657.7 L62.5 654.4 L63.4 657.7 L65.3 657.6 L67.3 657.3 L69.3 657.7 L70.1 651.8 L70.9 657.7 L72.9 657.8 L74.9 657.6 L76.9 657.4 L78.9 657.9 L80.9 657.7 L81.7 650.9 L82.5 657.7 L84.5 657.8 L86.5 657.4 L88.5 657.5 L90.5 657.6 L92.5 658.2 L94.5 657.7 L96.5 658.1 L98.5 657.7 L99.3 650.5 L100.1 657.7 L102.1 657.7 L102.9 652.5 L103.7 657.7 L105.7 657.7 L107.7 657.5 L109.7 657.3 L111.7 657.7 L112.5 654.2 L113.3 657.7 L115.3 657.9 L117.3 657.5 L119.3 657.6 L121.3 657.7 L122.1 651.6 L122.9 657.7 L124.9 657.8 L126.9 658.1 L128.9 657.6 L130.9 657.5 L132.9 657.6 L134.9 658.1 L136.9 657.6 L138.9 657.6 L140.9 657.6 L142.9 657.8 L144.9 657.7 L146.9 657.8 L148.9 658.0 L150.9 657.7 L151.7 652.8 L152.5 657.7 L154.5 657.7 L156.5 658.2 L158.5 657.7 L159.3 652.6 L160.1 657.7 L162.1 657.7 L162.9 655.7 L163.7 657.7 L165.7 657.9 L167.7 657.3 L169.7 657.3 L171.7 657.8 L173.7 657.4 L175.7 657.7 L177.7 657.6 L179.7 658.2 L181.7 657.7 L183.7 657.9 L185.7 658.1 L187.7 658.0 L189.7 658.1 L191.7 658.0 L193.7 658.2 L195.7 657.7 L197.7 658.0 L199.7 657.6 L201.7 657.9 L203.7 657.6 L205.7 657.4 L207.7 657.5 L209.7 657.3 L211.7 657.3 L213.7 658.0 L215.7 657.3 L217.7 657.8 L219.7 657.7 L220.5 655.0 L221.3 657.7 L223.3 657.4 L225.3 657.9 L227.3 657.4 L229.3 657.5 L231.3 658.0 L233.3 657.7 L235.3 657.7 L237.3 658.1 L239.3 657.5 L241.3 658.2 L243.3 657.7 L244.1 650.0 L244.9 657.7 L246.9 658.0 L248.9 657.7 L250.9 657.5 L252.9 657.9 L254.9 657.2 L256.9 657.6 L258.9 657.9 L260.9 657.4 L262.9 657.5 L264.9 658.1 L266.9 657.8 L268.9 657.5 L270.9 657.4 L272.9 657.2 L274.9 658.0 L276.9 657.3 L278.9 657.7 L279.7 653.1 L280.5 657.7 L282.5 657.7 L284.5 657.8 L286.5 657.5 L288.5 657.6 L290.5 657.3 L292.5 657.4 L294.5 657.7 L296.5 658.0 L298.5 657.7 L299.3 654.2 L300.1 657.7 L302.1 657.7 L304.1 657.6 L306.1 657.3 L308.1 657.7 L310.1 658.0 L312.1 657.2 L314.1 657.9 L316.1 657.8 L318.1 657.2 L320.1 658.0 L322.1 657.8 L324.1 657.6 L326.1 657.5 L328.1 657.6 L330.1 657.5 L332.1 657.9 L334.1 658.1 L336.1 657.9 L338.1 657.7 L338.9 655.3 L339.8 657.7 L341.8 657.3 L343.8 657.9 L345.8 657.6 L347.8 657.7 L348.6 654.7 L349.4 657.7 L351.4 657.4 L353.4 657.7 L354.2 650.2 L355.0 657.7 L357.0 657.6 L359.0 657.8 L361.0 658.0 L363.0 657.5 L365.0 657.2 L367.0 657.9 L369.0 658.0 L371.0 657.7 L371.8 654.0 L372.6 657.7 L374.6 657.5 L376.6 657.3 L378.6 657.7 L380.6 658.0 L382.6 657.4 L384.6 658.1 L386.6 657.6 L388.6 657.3 L390.6 658.2 L392.6 657.9 L394.6 657.4 L396.6 657.8 L398.6 657.3 L400.6 657.8 L402.6 657.5 L404.6 657.6 L406.6 657.3 L408.6 657.3 L410.6 657.7 L412.6 657.8 L414.6 658.1 L416.6 658.0 L418.6 657.3 L420.6 657.5 L422.6 657.4 L424.6 658.0 L426.6 657.7 L427.4 656.0 L428.2 657.7 L430.2 657.4 L432.2 658.1 L434.2 657.5 L436.2 657.9 L438.2 657.8 L440.2 657.2 L442.2 657.7 L444.2 657.6 L446.2 657.4 L448.2 657.5 L450.2 657.5 L452.2 657.2 L454.2 657.3 L456.2 657.8 L458.2 657.6 L460.2 657.9 L462.2 658.0 L464.2 658.2 L466.2 658.1 L468.2 657.6 L470.2 658.1 L472.2 657.7 L474.2 658.1 L476.2 657.3 L478.2 658.1 L480.2 657.8 L482.2 657.5 L484.2 657.3 L486.2 657.6 L488.2 657.7 L489.0 651.7 L489.8 657.7 L491.8 657.7 L493.8 657.5 L495.8 657.7 L496.6 650.3 L497.4 657.7 L499.4 658.2 L501.4 658.1 L503.4 658.0 L505.4 657.9 L507.4 657.7 L508.2 651.0 L509.0 657.7 L511.0 657.3 L513.0 657.7 L513.8 654.6 L514.6 657.7 L516.6 657.5 L518.6 657.3 L520.6 658.0 L522.6 657.6 L524.6 657.7 L525.4 650.4 L526.2 657.7 L528.2 657.5 L530.2 658.1 L532.2 657.7 L534.2 657.5 L536.2 658.1 L538.2 658.0 L540.2 657.7 L542.2 658.1 L544.2 657.4 L546.2 657.4 L548.2 657.7 L549.0 651.5 L549.8 657.7 L551.8 657.5 L553.8 658.1 L555.8 657.3 L557.8 658.1 L559.8 657.3 L561.8 657.5 L563.8 657.4 L565.8 657.4 L567.8 658.0 L569.8 657.9 L571.8 657.8 L573.8 657.5 L575.8 657.9 L577.8 657.7 L578.6 649.8 L579.4 657.7 L581.4 657.6 L583.4 657.7 L584.2 652.3 L585.0 657.7 L587.0 657.5 L589.0 657.7 L589.8 654.3 L590.6 657.7 L592.6 658.0 L594.6 657.5 L596.6 657.4 L598.6 657.7 L599.4 653.2 L600.2 657.7 L602.2 658.0 L604.2 658.1 L606.2 657.4 L608.2 657.8 L610.2 657.9 L612.2 657.7 L614.2 658.0 L616.2 657.7 L618.2 657.4 L620.2 657.4 L622.2 657.4 L624.2 658.0 L626.2 658.0 L628.2 657.7 L630.2 657.8 L632.2 657.2 L634.2 657.9 L636.2 658.1 L638.2 657.7 L639.0 653.0 L639.8 657.7 L641.8 657.6 L643.8 657.5 L645.8 657.3 L647.8 657.8 L649.8 658.0 L651.8 657.3 L653.8 657.2 L655.8 657.8 L657.8 657.5 L659.8 657.3 L661.8 657.4 L663.8 657.4 L665.8 658.0 L667.8 657.3 L669.8 657.6 L671.8 657.7 L672.6 653.0 L673.4 657.7" fill="none" stroke="#786ea2" stroke-width="1.0" opacity="1" stroke-linejoin="round"/><path d="M51.8 681.1H672.5" stroke="#adb19e" stroke-width="1.8" opacity="1"/><rect x="51.75" y="699" width="620.75" height="4.5" fill="#5a6a68" opacity="0.6"/><path d="M51.8 703.5L52.9 701.4L54.0 703.5Z" fill="#96d98d" opacity="0.75"/><path d="M53.0 703.5L54.0 693.5L54.9 703.5Z" fill="#ffb357" opacity="0.75"/><path d="M54.1 703.5L54.8 698.8L55.5 703.5Z" fill="#b877d9" opacity="0.75"/><path d="M54.8 703.5L56.1 701.4L57.3 703.5Z" fill="#e0f0d0" opacity="0.75"/><path d="M56.2 703.5L57.3 700.3L58.5 703.5Z" fill="#f2495c" opacity="0.75"/><path d="M57.5 703.5L58.1 700.8L58.8 703.5Z" fill="#fade2a" opacity="0.75"/><path d="M58.2 703.5L59.5 698.6L60.7 703.5Z" fill="#c0d8ff" opacity="0.75"/><path d="M59.6 703.5L60.3 697.7L61.1 703.5Z" fill="#73bf69" opacity="0.75"/><path d="M60.4 703.5L61.5 699.6L62.6 703.5Z" fill="#c0d8ff" opacity="0.75"/><path d="M61.6 703.5L62.9 697.8L64.1 703.5Z" fill="#a8e0e8" opacity="0.75"/><path d="M63.0 703.5L63.8 693.5L64.5 703.5Z" fill="#ff9830" opacity="0.75"/><path d="M63.8 703.5L64.6 699.5L65.3 703.5Z" fill="#ff9830" opacity="0.75"/><path d="M64.6 703.5L65.5 699.7L66.4 703.5Z" fill="#96d98d" opacity="0.75"/><path d="M65.6 703.5L66.5 701.5L67.4 703.5Z" fill="#a8e0e8" opacity="0.75"/><path d="M66.6 703.5L67.6 699.4L68.5 703.5Z" fill="#73bf69" opacity="0.75"/><path d="M67.6 703.5L68.7 698.6L69.8 703.5Z" fill="#73bf69" opacity="0.75"/><path d="M68.8 703.5L69.8 700.3L70.8 703.5Z" fill="#c0d8ff" opacity="0.75"/><path d="M69.9 703.5L71.1 700.2L72.4 703.5Z" fill="#5794f2" opacity="0.75"/><path d="M71.3 703.5L71.9 700.3L72.5 703.5Z" fill="#8ab8ff" opacity="0.75"/><path d="M72.0 703.5L73.1 700.3L74.2 703.5Z" fill="#73bf69" opacity="0.75"/><path d="M73.2 703.5L74.5 700.8L75.8 703.5Z" fill="#a8e0e8" opacity="0.75"/><path d="M74.7 703.5L75.9 698.5L77.1 703.5Z" fill="#ffb357" opacity="0.75"/><path d="M76.0 703.5L77.1 698.4L78.1 703.5Z" fill="#96d98d" opacity="0.75"/><path d="M77.2 703.5L77.8 697.7L78.4 703.5Z" fill="#73bf69" opacity="0.75"/><path d="M77.9 703.5L78.6 698.8L79.3 703.5Z" fill="#e0f0d0" opacity="0.75"/><path d="M78.7 703.5L79.4 700.2L80.1 703.5Z" fill="#e0f0d0" opacity="0.75"/><path d="M79.4 703.5L80.4 698.7L81.3 703.5Z" fill="#a8e0e8" opacity="0.75"/><path d="M80.4 703.5L81.2 700.2L82.0 703.5Z" fill="#b877d9" opacity="0.75"/><path d="M81.3 703.5L82.3 698.6L83.2 703.5Z" fill="#5794f2" opacity="0.75"/><path d="M82.4 703.5L83.2 691.1L84.1 703.5Z" fill="#ca95e5" opacity="0.75"/><path d="M83.3 703.5L84.2 697.1L85.2 703.5Z" fill="#e0f0d0" opacity="0.75"/><path d="M84.3 703.5L85.1 700.0L86.0 703.5Z" fill="#ff9830" opacity="0.75"/><path d="M85.2 703.5L86.2 698.6L87.2 703.5Z" fill="#f0c8d8" opacity="0.75"/><path d="M86.3 703.5L87.5 698.1L88.7 703.5Z" fill="#fade2a" opacity="0.75"/><path d="M87.6 703.5L88.8 697.5L90.0 703.5Z" fill="#96d98d" opacity="0.75"/><path d="M88.9 703.5L89.8 698.5L90.7 703.5Z" fill="#f2495c" opacity="0.75"/><path d="M89.9 703.5L90.6 701.2L91.4 703.5Z" fill="#f0c8d8" opacity="0.75"/><path d="M90.7 703.5L91.4 700.0L92.1 703.5Z" fill="#fade2a" opacity="0.75"/><path d="M91.5 703.5L92.6 701.1L93.7 703.5Z" fill="#96d98d" opacity="0.75"/><path d="M92.7 703.5L93.7 700.2L94.7 703.5Z" fill="#e0f0d0" opacity="0.75"/><path d="M93.8 703.5L95.1 701.1L96.3 703.5Z" fill="#fade2a" opacity="0.75"/><path d="M95.2 703.5L96.4 698.2L97.7 703.5Z" fill="#a8e0e8" opacity="0.75"/><path d="M96.6 703.5L97.6 699.1L98.6 703.5Z" fill="#f2495c" opacity="0.75"/><path d="M97.7 703.5L98.3 697.2L99.0 703.5Z" fill="#5794f2" opacity="0.75"/><path d="M98.4 703.5L99.4 698.2L100.4 703.5Z" fill="#8ab8ff" opacity="0.75"/><path d="M99.5 703.5L100.5 698.7L101.6 703.5Z" fill="#5794f2" opacity="0.75"/><path d="M100.6 703.5L101.3 700.2L101.9 703.5Z" fill="#fade2a" opacity="0.75"/><path d="M101.3 703.5L102.4 699.8L103.4 703.5Z" fill="#b877d9" opacity="0.75"/><path d="M102.5 703.5L103.1 697.3L103.8 703.5Z" fill="#96d98d" opacity="0.75"/><path d="M103.2 703.5L104.0 691.8L104.9 703.5Z" fill="#ffb357" opacity="0.75"/><path d="M104.1 703.5L104.9 699.2L105.7 703.5Z" fill="#73bf69" opacity="0.75"/><path d="M105.0 703.5L105.7 697.9L106.4 703.5Z" fill="#ca95e5" opacity="0.75"/><path d="M105.8 703.5L106.5 699.3L107.3 703.5Z" fill="#b877d9" opacity="0.75"/><path d="M106.6 703.5L107.2 699.5L107.8 703.5Z" fill="#f0c8d8" opacity="0.75"/><path d="M107.3 703.5L108.3 699.8L109.2 703.5Z" fill="#a8e0e8" opacity="0.75"/><path d="M108.4 703.5L109.4 700.6L110.5 703.5Z" fill="#fade2a" opacity="0.75"/><path d="M109.5 703.5L110.8 698.4L112.0 703.5Z" fill="#e0f0d0" opacity="0.75"/><path d="M110.9 703.5L111.8 697.7L112.6 703.5Z" fill="#8ab8ff" opacity="0.75"/><path d="M111.9 703.5L112.6 699.8L113.3 703.5Z" fill="#c0d8ff" opacity="0.75"/><path d="M112.6 703.5L113.4 698.9L114.2 703.5Z" fill="#ca95e5" opacity="0.75"/><path d="M113.5 703.5L114.5 698.1L115.5 703.5Z" fill="#5794f2" opacity="0.75"/><path d="M114.6 703.5L115.7 701.1L116.8 703.5Z" fill="#fade2a" opacity="0.75"/><path d="M115.8 703.5L117.1 700.7L118.4 703.5Z" fill="#f2495c" opacity="0.75"/><path d="M117.2 703.5L117.9 699.0L118.6 703.5Z" fill="#96d98d" opacity="0.75"/><path d="M118.0 703.5L118.6 699.8L119.2 703.5Z" fill="#96d98d" opacity="0.75"/><path d="M118.7 703.5L119.3 698.1L119.9 703.5Z" fill="#f0c8d8" opacity="0.75"/><path d="M119.4 703.5L120.4 698.1L121.5 703.5Z" fill="#5794f2" opacity="0.75"/><path d="M120.6 703.5L121.7 698.5L122.8 703.5Z" fill="#f0c8d8" opacity="0.75"/><path d="M121.8 703.5L122.5 699.5L123.2 703.5Z" fill="#b877d9" opacity="0.75"/><path d="M122.6 703.5L123.6 697.6L124.7 703.5Z" fill="#f2495c" opacity="0.75"/><path d="M123.7 703.5L124.9 697.6L126.1 703.5Z" fill="#ca95e5" opacity="0.75"/><path d="M125.0 703.5L125.8 699.9L126.6 703.5Z" fill="#96d98d" opacity="0.75"/><path d="M125.9 703.5L126.9 701.2L127.9 703.5Z" fill="#8ab8ff" opacity="0.75"/><path d="M127.0 703.5L127.8 698.2L128.6 703.5Z" fill="#ca95e5" opacity="0.75"/><path d="M127.9 703.5L128.8 701.2L129.6 703.5Z" fill="#73bf69" opacity="0.75"/><path d="M128.8 703.5L129.5 701.5L130.3 703.5Z" fill="#ff9830" opacity="0.75"/><path d="M129.6 703.5L130.4 700.3L131.2 703.5Z" fill="#fade2a" opacity="0.75"/><path d="M130.5 703.5L131.4 701.1L132.3 703.5Z" fill="#a8e0e8" opacity="0.75"/><path d="M131.5 703.5L132.4 698.7L133.3 703.5Z" fill="#f0c8d8" opacity="0.75"/><path d="M132.5 703.5L133.7 699.9L134.9 703.5Z" fill="#e0f0d0" opacity="0.75"/><path d="M133.8 703.5L134.9 700.4L135.9 703.5Z" fill="#b877d9" opacity="0.75"/><path d="M135.0 703.5L136.0 698.0L137.1 703.5Z" fill="#a8e0e8" opacity="0.75"/><path d="M136.1 703.5L136.9 697.8L137.6 703.5Z" fill="#f2495c" opacity="0.75"/><path d="M136.9 703.5L138.1 698.9L139.4 703.5Z" fill="#73bf69" opacity="0.75"/><path d="M138.3 703.5L139.0 699.6L139.8 703.5Z" fill="#b877d9" opacity="0.75"/><path d="M139.1 703.5L139.9 698.0L140.7 703.5Z" fill="#5794f2" opacity="0.75"/><path d="M140.0 703.5L141.0 699.5L142.0 703.5Z" fill="#73bf69" opacity="0.75"/><path d="M141.1 703.5L142.3 698.4L143.5 703.5Z" fill="#8ab8ff" opacity="0.75"/><path d="M142.4 703.5L143.3 697.6L144.1 703.5Z" fill="#a8e0e8" opacity="0.75"/><path d="M143.3 703.5L144.2 697.1L145.1 703.5Z" fill="#ffb357" opacity="0.75"/><path d="M144.3 703.5L145.2 697.3L146.1 703.5Z" fill="#ca95e5" opacity="0.75"/><path d="M145.3 703.5L146.5 698.1L147.6 703.5Z" fill="#f2495c" opacity="0.75"/><path d="M146.6 703.5L147.8 701.5L149.0 703.5Z" fill="#a8e0e8" opacity="0.75"/><path d="M147.9 703.5L149.2 697.2L150.4 703.5Z" fill="#8ab8ff" opacity="0.75"/><path d="M149.3 703.5L150.3 700.0L151.3 703.5Z" fill="#73bf69" opacity="0.75"/><path d="M150.4 703.5L151.5 698.4L152.6 703.5Z" fill="#73bf69" opacity="0.75"/><path d="M151.6 703.5L152.8 697.3L154.1 703.5Z" fill="#f0c8d8" opacity="0.75"/><path d="M153.0 703.5L153.9 700.6L154.9 703.5Z" fill="#e0f0d0" opacity="0.75"/><path d="M154.0 703.5L155.0 698.4L155.9 703.5Z" fill="#ca95e5" opacity="0.75"/><path d="M155.1 703.5L156.2 701.4L157.3 703.5Z" fill="#96d98d" opacity="0.75"/><path d="M156.3 703.5L157.2 700.2L158.1 703.5Z" fill="#c0d8ff" opacity="0.75"/><path d="M157.3 703.5L157.9 699.6L158.5 703.5Z" fill="#b877d9" opacity="0.75"/><path d="M158.0 703.5L159.1 699.3L160.2 703.5Z" fill="#5794f2" opacity="0.75"/><path d="M159.2 703.5L160.2 699.0L161.3 703.5Z" fill="#fade2a" opacity="0.75"/><path d="M160.3 703.5L161.6 698.4L162.8 703.5Z" fill="#5794f2" opacity="0.75"/><path d="M161.7 703.5L162.4 691.8L163.2 703.5Z" fill="#f2495c" opacity="0.75"/><path d="M162.5 703.5L163.6 697.8L164.7 703.5Z" fill="#8ab8ff" opacity="0.75"/><path d="M163.7 703.5L164.5 693.4L165.4 703.5Z" fill="#73bf69" opacity="0.75"/><path d="M164.6 703.5L165.5 698.4L166.4 703.5Z" fill="#f0c8d8" opacity="0.75"/><path d="M165.6 703.5L166.3 701.0L167.1 703.5Z" fill="#f0c8d8" opacity="0.75"/><path d="M166.4 703.5L167.4 699.6L168.4 703.5Z" fill="#96d98d" opacity="0.75"/><path d="M167.5 703.5L168.8 698.0L170.1 703.5Z" fill="#e0f0d0" opacity="0.75"/><path d="M168.9 703.5L170.2 700.7L171.4 703.5Z" fill="#b877d9" opacity="0.75"/><path d="M170.3 703.5L171.5 698.5L172.8 703.5Z" fill="#5794f2" opacity="0.75"/><path d="M171.7 703.5L172.6 697.0L173.6 703.5Z" fill="#ca95e5" opacity="0.75"/><path d="M172.7 703.5L173.6 699.9L174.5 703.5Z" fill="#c0d8ff" opacity="0.75"/><path d="M173.7 703.5L174.5 699.0L175.4 703.5Z" fill="#b877d9" opacity="0.75"/><path d="M174.6 703.5L175.6 699.6L176.5 703.5Z" fill="#a8e0e8" opacity="0.75"/><path d="M175.7 703.5L176.8 700.3L177.9 703.5Z" fill="#96d98d" opacity="0.75"/><path d="M176.9 703.5L177.8 698.7L178.7 703.5Z" fill="#c0d8ff" opacity="0.75"/><path d="M177.9 703.5L178.8 697.2L179.8 703.5Z" fill="#ffb357" opacity="0.75"/><path d="M178.9 703.5L180.0 699.0L181.0 703.5Z" fill="#c0d8ff" opacity="0.75"/><path d="M180.1 703.5L180.7 698.5L181.4 703.5Z" fill="#5794f2" opacity="0.75"/><path d="M180.8 703.5L182.1 700.3L183.4 703.5Z" fill="#e0f0d0" opacity="0.75"/><path d="M182.2 703.5L183.1 699.5L184.1 703.5Z" fill="#8ab8ff" opacity="0.75"/><path d="M183.2 703.5L184.4 701.0L185.5 703.5Z" fill="#8ab8ff" opacity="0.75"/><path d="M184.5 703.5L185.7 699.9L186.9 703.5Z" fill="#a8e0e8" opacity="0.75"/><path d="M185.8 703.5L186.5 697.5L187.1 703.5Z" fill="#f2495c" opacity="0.75"/><path d="M186.5 703.5L187.2 700.9L187.8 703.5Z" fill="#f2495c" opacity="0.75"/><path d="M187.2 703.5L188.2 698.6L189.2 703.5Z" fill="#73bf69" opacity="0.75"/><path d="M188.3 703.5L189.5 697.9L190.7 703.5Z" fill="#ca95e5" opacity="0.75"/><path d="M189.6 703.5L190.4 697.5L191.2 703.5Z" fill="#f0c8d8" opacity="0.75"/><path d="M190.5 703.5L191.4 698.1L192.4 703.5Z" fill="#a8e0e8" opacity="0.75"/><path d="M191.5 703.5L192.1 700.9L192.8 703.5Z" fill="#fade2a" opacity="0.75"/><path d="M192.2 703.5L193.4 697.7L194.5 703.5Z" fill="#fade2a" opacity="0.75"/><path d="M193.5 703.5L194.3 701.2L195.2 703.5Z" fill="#ff9830" opacity="0.75"/><path d="M194.4 703.5L195.6 697.5L196.8 703.5Z" fill="#b877d9" opacity="0.75"/><path d="M195.7 703.5L196.3 700.1L196.9 703.5Z" fill="#96d98d" opacity="0.75"/><path d="M196.4 703.5L197.0 701.4L197.7 703.5Z" fill="#ca95e5" opacity="0.75"/><path d="M197.1 703.5L197.9 701.3L198.7 703.5Z" fill="#ffb357" opacity="0.75"/><path d="M198.0 703.5L199.1 693.0L200.1 703.5Z" fill="#5794f2" opacity="0.75"/><path d="M199.2 703.5L200.4 701.3L201.6 703.5Z" fill="#ff9830" opacity="0.75"/><path d="M200.5 703.5L201.6 697.8L202.7 703.5Z" fill="#e0f0d0" opacity="0.75"/><path d="M201.7 703.5L202.7 697.2L203.7 703.5Z" fill="#f2495c" opacity="0.75"/><path d="M202.8 703.5L204.1 699.7L205.3 703.5Z" fill="#ff9830" opacity="0.75"/><path d="M204.2 703.5L204.8 697.3L205.4 703.5Z" fill="#e0f0d0" opacity="0.75"/><path d="M204.8 703.5L205.7 698.4L206.5 703.5Z" fill="#8ab8ff" opacity="0.75"/><path d="M205.8 703.5L206.4 698.2L207.1 703.5Z" fill="#c0d8ff" opacity="0.75"/><path d="M206.5 703.5L207.4 699.1L208.3 703.5Z" fill="#fade2a" opacity="0.75"/><path d="M207.5 703.5L208.3 700.2L209.2 703.5Z" fill="#c0d8ff" opacity="0.75"/><path d="M208.4 703.5L209.1 697.6L209.8 703.5Z" fill="#a8e0e8" opacity="0.75"/><path d="M209.1 703.5L209.8 699.9L210.5 703.5Z" fill="#96d98d" opacity="0.75"/><path d="M209.9 703.5L210.7 700.3L211.6 703.5Z" fill="#96d98d" opacity="0.75"/><path d="M210.8 703.5L211.9 698.7L212.9 703.5Z" fill="#c0d8ff" opacity="0.75"/><path d="M212.0 703.5L212.9 701.3L213.8 703.5Z" fill="#e0f0d0" opacity="0.75"/><path d="M213.0 703.5L213.6 693.2L214.2 703.5Z" fill="#c0d8ff" opacity="0.75"/><path d="M213.7 703.5L214.9 698.1L216.1 703.5Z" fill="#5794f2" opacity="0.75"/><path d="M215.0 703.5L215.7 701.0L216.3 703.5Z" fill="#fade2a" opacity="0.75"/><path d="M215.7 703.5L216.7 697.4L217.7 703.5Z" fill="#fade2a" opacity="0.75"/><path d="M216.8 703.5L218.0 694.5L219.1 703.5Z" fill="#e0f0d0" opacity="0.75"/><path d="M218.1 703.5L218.9 701.0L219.8 703.5Z" fill="#73bf69" opacity="0.75"/><path d="M219.0 703.5L220.1 697.7L221.1 703.5Z" fill="#8ab8ff" opacity="0.75"/><path d="M220.2 703.5L221.1 698.4L222.0 703.5Z" fill="#c0d8ff" opacity="0.75"/><path d="M221.2 703.5L221.8 695.7L222.5 703.5Z" fill="#b877d9" opacity="0.75"/><path d="M221.9 703.5L223.1 699.9L224.3 703.5Z" fill="#73bf69" opacity="0.75"/><path d="M223.2 703.5L223.9 699.1L224.5 703.5Z" fill="#ca95e5" opacity="0.75"/><path d="M223.9 703.5L225.2 699.3L226.4 703.5Z" fill="#96d98d" opacity="0.75"/><path d="M225.3 703.5L226.2 697.6L227.0 703.5Z" fill="#e0f0d0" opacity="0.75"/><path d="M226.2 703.5L227.4 697.0L228.6 703.5Z" fill="#e0f0d0" opacity="0.75"/><path d="M227.5 703.5L228.6 700.3L229.6 703.5Z" fill="#f0c8d8" opacity="0.75"/><path d="M228.7 703.5L229.9 699.1L231.2 703.5Z" fill="#b877d9" opacity="0.75"/><path d="M230.1 703.5L231.0 697.1L231.9 703.5Z" fill="#a8e0e8" opacity="0.75"/><path d="M231.1 703.5L232.3 697.1L233.5 703.5Z" fill="#ffb357" opacity="0.75"/><path d="M232.4 703.5L233.4 701.4L234.4 703.5Z" fill="#fade2a" opacity="0.75"/><path d="M233.5 703.5L234.3 699.3L235.1 703.5Z" fill="#c0d8ff" opacity="0.75"/><path d="M234.4 703.5L235.2 700.0L235.9 703.5Z" fill="#f2495c" opacity="0.75"/><path d="M235.3 703.5L236.1 700.5L236.9 703.5Z" fill="#b877d9" opacity="0.75"/><path d="M236.1 703.5L237.1 701.5L238.0 703.5Z" fill="#8ab8ff" opacity="0.75"/><path d="M237.2 703.5L238.2 699.1L239.1 703.5Z" fill="#fade2a" opacity="0.75"/><path d="M238.3 703.5L239.4 699.3L240.6 703.5Z" fill="#c0d8ff" opacity="0.75"/><path d="M239.5 703.5L240.5 698.8L241.5 703.5Z" fill="#a8e0e8" opacity="0.75"/><path d="M240.6 703.5L241.7 697.5L242.8 703.5Z" fill="#ff9830" opacity="0.75"/><path d="M241.8 703.5L242.5 700.7L243.2 703.5Z" fill="#e0f0d0" opacity="0.75"/><path d="M242.6 703.5L243.5 698.3L244.3 703.5Z" fill="#b877d9" opacity="0.75"/><path d="M243.5 703.5L244.2 698.4L244.9 703.5Z" fill="#ca95e5" opacity="0.75"/><path d="M244.3 703.5L245.4 700.5L246.6 703.5Z" fill="#f2495c" opacity="0.75"/><path d="M245.5 703.5L246.2 698.2L246.8 703.5Z" fill="#b877d9" opacity="0.75"/><path d="M246.3 703.5L247.1 699.2L247.9 703.5Z" fill="#ffb357" opacity="0.75"/><path d="M247.2 703.5L248.4 699.6L249.7 703.5Z" fill="#fade2a" opacity="0.75"/><path d="M248.6 703.5L249.4 698.3L250.3 703.5Z" fill="#f2495c" opacity="0.75"/><path d="M249.5 703.5L250.3 697.4L251.0 703.5Z" fill="#b877d9" opacity="0.75"/><path d="M250.3 703.5L251.2 698.9L252.0 703.5Z" fill="#73bf69" opacity="0.75"/><path d="M251.3 703.5L252.1 699.4L252.9 703.5Z" fill="#b877d9" opacity="0.75"/><path d="M252.2 703.5L253.2 698.8L254.1 703.5Z" fill="#fade2a" opacity="0.75"/><path d="M253.3 703.5L254.4 697.1L255.5 703.5Z" fill="#ff9830" opacity="0.75"/><path d="M254.5 703.5L255.4 699.4L256.4 703.5Z" fill="#5794f2" opacity="0.75"/><path d="M255.5 703.5L256.4 694.6L257.3 703.5Z" fill="#ff9830" opacity="0.75"/><path d="M256.5 703.5L257.4 699.7L258.2 703.5Z" fill="#f2495c" opacity="0.75"/><path d="M257.4 703.5L258.2 700.4L258.9 703.5Z" fill="#8ab8ff" opacity="0.75"/><path d="M258.3 703.5L259.2 699.3L260.2 703.5Z" fill="#73bf69" opacity="0.75"/><path d="M259.3 703.5L260.5 698.0L261.7 703.5Z" fill="#f0c8d8" opacity="0.75"/><path d="M260.6 703.5L261.8 698.9L262.9 703.5Z" fill="#b877d9" opacity="0.75"/><path d="M261.9 703.5L262.6 699.6L263.2 703.5Z" fill="#b877d9" opacity="0.75"/><path d="M262.6 703.5L263.9 700.7L265.2 703.5Z" fill="#5794f2" opacity="0.75"/><path d="M264.1 703.5L264.8 697.7L265.5 703.5Z" fill="#f2495c" opacity="0.75"/><path d="M264.8 703.5L265.5 694.7L266.1 703.5Z" fill="#ffb357" opacity="0.75"/><path d="M265.5 703.5L266.2 698.5L266.9 703.5Z" fill="#c0d8ff" opacity="0.75"/><path d="M266.3 703.5L267.6 700.4L268.8 703.5Z" fill="#73bf69" opacity="0.75"/><path d="M267.7 703.5L268.9 699.2L270.0 703.5Z" fill="#ca95e5" opacity="0.75"/><path d="M269.0 703.5L270.3 701.1L271.5 703.5Z" fill="#f0c8d8" opacity="0.75"/><path d="M270.4 703.5L271.0 700.1L271.7 703.5Z" fill="#f0c8d8" opacity="0.75"/><path d="M271.1 703.5L272.0 699.0L272.9 703.5Z" fill="#5794f2" opacity="0.75"/><path d="M272.1 703.5L273.3 700.3L274.6 703.5Z" fill="#a8e0e8" opacity="0.75"/><path d="M273.5 703.5L274.3 700.7L275.2 703.5Z" fill="#e0f0d0" opacity="0.75"/><path d="M274.4 703.5L275.1 698.4L275.8 703.5Z" fill="#ffb357" opacity="0.75"/><path d="M275.2 703.5L275.8 700.9L276.5 703.5Z" fill="#5794f2" opacity="0.75"/><path d="M275.9 703.5L276.9 700.8L277.9 703.5Z" fill="#a8e0e8" opacity="0.75"/><path d="M277.0 703.5L277.8 698.8L278.6 703.5Z" fill="#b877d9" opacity="0.75"/><path d="M277.8 703.5L278.6 700.2L279.3 703.5Z" fill="#b877d9" opacity="0.75"/><path d="M278.7 703.5L279.7 698.7L280.8 703.5Z" fill="#fade2a" opacity="0.75"/><path d="M279.8 703.5L280.8 700.8L281.8 703.5Z" fill="#5794f2" opacity="0.75"/><path d="M280.9 703.5L281.7 698.6L282.4 703.5Z" fill="#5794f2" opacity="0.75"/><path d="M281.7 703.5L282.6 700.6L283.5 703.5Z" fill="#96d98d" opacity="0.75"/><path d="M282.7 703.5L283.7 700.8L284.7 703.5Z" fill="#c0d8ff" opacity="0.75"/><path d="M283.8 703.5L284.5 700.2L285.2 703.5Z" fill="#fade2a" opacity="0.75"/><path d="M284.6 703.5L285.7 698.1L286.8 703.5Z" fill="#e0f0d0" opacity="0.75"/><path d="M285.8 703.5L286.7 697.2L287.5 703.5Z" fill="#f0c8d8" opacity="0.75"/><path d="M286.7 703.5L287.9 698.7L289.1 703.5Z" fill="#b877d9" opacity="0.75"/><path d="M288.0 703.5L289.3 697.3L290.5 703.5Z" fill="#b877d9" opacity="0.75"/><path d="M289.4 703.5L290.6 699.1L291.9 703.5Z" fill="#ff9830" opacity="0.75"/><path d="M290.8 703.5L291.5 699.8L292.2 703.5Z" fill="#ffb357" opacity="0.75"/><path d="M291.6 703.5L292.8 697.2L294.0 703.5Z" fill="#c0d8ff" opacity="0.75"/><path d="M292.9 703.5L293.6 699.2L294.3 703.5Z" fill="#96d98d" opacity="0.75"/><path d="M293.7 703.5L294.9 700.4L296.2 703.5Z" fill="#fade2a" opacity="0.75"/><path d="M295.1 703.5L295.8 697.7L296.6 703.5Z" fill="#a8e0e8" opacity="0.75"/><path d="M295.9 703.5L296.9 699.7L297.9 703.5Z" fill="#f0c8d8" opacity="0.75"/><path d="M297.0 703.5L297.7 697.8L298.4 703.5Z" fill="#5794f2" opacity="0.75"/><path d="M297.8 703.5L298.9 698.6L299.9 703.5Z" fill="#e0f0d0" opacity="0.75"/><path d="M299.0 703.5L300.1 699.7L301.3 703.5Z" fill="#f2495c" opacity="0.75"/><path d="M300.3 703.5L300.9 698.6L301.6 703.5Z" fill="#f2495c" opacity="0.75"/><path d="M301.0 703.5L302.1 698.3L303.1 703.5Z" fill="#f2495c" opacity="0.75"/><path d="M302.2 703.5L303.1 698.2L304.1 703.5Z" fill="#f2495c" opacity="0.75"/><path d="M303.2 703.5L304.5 697.7L305.7 703.5Z" fill="#a8e0e8" opacity="0.75"/><path d="M304.6 703.5L305.8 700.8L307.0 703.5Z" fill="#ffb357" opacity="0.75"/><path d="M305.9 703.5L307.1 697.7L308.2 703.5Z" fill="#e0f0d0" opacity="0.75"/><path d="M307.2 703.5L308.4 700.5L309.7 703.5Z" fill="#73bf69" opacity="0.75"/><path d="M308.6 703.5L309.5 700.5L310.4 703.5Z" fill="#ffb357" opacity="0.75"/><path d="M309.5 703.5L310.3 699.0L311.1 703.5Z" fill="#e0f0d0" opacity="0.75"/><path d="M310.4 703.5L311.1 699.9L311.9 703.5Z" fill="#e0f0d0" opacity="0.75"/><path d="M311.2 703.5L312.1 698.0L312.9 703.5Z" fill="#fade2a" opacity="0.75"/><path d="M312.1 703.5L313.1 701.2L314.1 703.5Z" fill="#f2495c" opacity="0.75"/><path d="M313.2 703.5L314.5 697.5L315.7 703.5Z" fill="#fade2a" opacity="0.75"/><path d="M314.6 703.5L315.3 698.7L316.1 703.5Z" fill="#8ab8ff" opacity="0.75"/><path d="M315.4 703.5L316.1 700.0L316.7 703.5Z" fill="#73bf69" opacity="0.75"/><path d="M316.1 703.5L317.0 697.6L317.9 703.5Z" fill="#a8e0e8" opacity="0.75"/><path d="M317.1 703.5L318.4 701.1L319.7 703.5Z" fill="#b877d9" opacity="0.75"/><path d="M318.5 703.5L319.5 697.8L320.4 703.5Z" fill="#5794f2" opacity="0.75"/><path d="M319.6 703.5L320.6 701.2L321.6 703.5Z" fill="#fade2a" opacity="0.75"/><path d="M320.7 703.5L321.6 699.2L322.5 703.5Z" fill="#96d98d" opacity="0.75"/><path d="M321.7 703.5L322.3 701.2L322.9 703.5Z" fill="#fade2a" opacity="0.75"/><path d="M322.4 703.5L323.1 698.4L323.8 703.5Z" fill="#e0f0d0" opacity="0.75"/><path d="M323.1 703.5L323.9 697.7L324.7 703.5Z" fill="#a8e0e8" opacity="0.75"/><path d="M324.0 703.5L325.2 700.9L326.5 703.5Z" fill="#73bf69" opacity="0.75"/><path d="M325.4 703.5L326.4 700.6L327.4 703.5Z" fill="#c0d8ff" opacity="0.75"/><path d="M326.5 703.5L327.5 699.8L328.6 703.5Z" fill="#fade2a" opacity="0.75"/><path d="M327.6 703.5L328.8 697.7L329.9 703.5Z" fill="#fade2a" opacity="0.75"/><path d="M328.9 703.5L329.6 700.9L330.2 703.5Z" fill="#73bf69" opacity="0.75"/><path d="M329.6 703.5L330.5 697.7L331.4 703.5Z" fill="#c0d8ff" opacity="0.75"/><path d="M330.6 703.5L331.6 699.6L332.5 703.5Z" fill="#f0c8d8" opacity="0.75"/><path d="M331.7 703.5L332.3 698.7L333.0 703.5Z" fill="#ff9830" opacity="0.75"/><path d="M332.4 703.5L333.7 700.8L335.0 703.5Z" fill="#5794f2" opacity="0.75"/><path d="M333.8 703.5L334.6 698.8L335.3 703.5Z" fill="#ff9830" opacity="0.75"/><path d="M334.6 703.5L335.4 699.6L336.2 703.5Z" fill="#5794f2" opacity="0.75"/><path d="M335.5 703.5L336.5 698.6L337.4 703.5Z" fill="#b877d9" opacity="0.75"/><path d="M336.6 703.5L337.3 697.7L338.0 703.5Z" fill="#96d98d" opacity="0.75"/><path d="M337.4 703.5L338.1 701.1L338.9 703.5Z" fill="#ca95e5" opacity="0.75"/><path d="M338.2 703.5L339.2 698.2L340.3 703.5Z" fill="#f2495c" opacity="0.75"/><path d="M339.3 703.5L340.3 697.1L341.4 703.5Z" fill="#fade2a" opacity="0.75"/><path d="M340.5 703.5L341.3 698.5L342.1 703.5Z" fill="#ca95e5" opacity="0.75"/><path d="M341.3 703.5L342.0 698.1L342.6 703.5Z" fill="#ca95e5" opacity="0.75"/><path d="M342.0 703.5L343.2 698.1L344.3 703.5Z" fill="#b877d9" opacity="0.75"/><path d="M343.3 703.5L344.3 697.6L345.3 703.5Z" fill="#fade2a" opacity="0.75"/><path d="M344.4 703.5L345.6 701.5L346.8 703.5Z" fill="#8ab8ff" opacity="0.75"/><path d="M345.7 703.5L346.6 700.0L347.5 703.5Z" fill="#f0c8d8" opacity="0.75"/><path d="M346.7 703.5L347.5 701.1L348.2 703.5Z" fill="#e0f0d0" opacity="0.75"/><path d="M347.5 703.5L348.2 701.4L348.8 703.5Z" fill="#73bf69" opacity="0.75"/><path d="M348.2 703.5L349.2 698.7L350.1 703.5Z" fill="#8ab8ff" opacity="0.75"/><path d="M349.3 703.5L350.0 697.9L350.7 703.5Z" fill="#ff9830" opacity="0.75"/><path d="M350.1 703.5L351.3 698.5L352.6 703.5Z" fill="#8ab8ff" opacity="0.75"/><path d="M351.4 703.5L352.6 692.4L353.8 703.5Z" fill="#e0f0d0" opacity="0.75"/><path d="M352.7 703.5L353.8 701.0L354.9 703.5Z" fill="#ca95e5" opacity="0.75"/><path d="M353.9 703.5L354.8 698.7L355.7 703.5Z" fill="#f2495c" opacity="0.75"/><path d="M354.9 703.5L355.6 700.9L356.3 703.5Z" fill="#e0f0d0" opacity="0.75"/><path d="M355.7 703.5L356.5 697.2L357.4 703.5Z" fill="#8ab8ff" opacity="0.75"/><path d="M356.6 703.5L357.6 698.2L358.6 703.5Z" fill="#a8e0e8" opacity="0.75"/><path d="M357.7 703.5L358.7 700.4L359.7 703.5Z" fill="#fade2a" opacity="0.75"/><path d="M358.8 703.5L359.5 698.0L360.1 703.5Z" fill="#f2495c" opacity="0.75"/><path d="M359.5 703.5L360.8 701.2L362.1 703.5Z" fill="#8ab8ff" opacity="0.75"/><path d="M360.9 703.5L361.7 698.5L362.4 703.5Z" fill="#f2495c" opacity="0.75"/><path d="M361.7 703.5L362.7 701.0L363.6 703.5Z" fill="#5794f2" opacity="0.75"/><path d="M362.8 703.5L363.8 700.8L364.8 703.5Z" fill="#ff9830" opacity="0.75"/><path d="M363.9 703.5L364.6 699.1L365.3 703.5Z" fill="#96d98d" opacity="0.75"/><path d="M364.7 703.5L365.8 698.8L366.9 703.5Z" fill="#8ab8ff" opacity="0.75"/><path d="M365.9 703.5L366.5 698.8L367.2 703.5Z" fill="#73bf69" opacity="0.75"/><path d="M366.6 703.5L367.2 698.9L367.8 703.5Z" fill="#c0d8ff" opacity="0.75"/><path d="M367.3 703.5L368.3 699.1L369.4 703.5Z" fill="#73bf69" opacity="0.75"/><path d="M368.4 703.5L369.2 701.4L369.9 703.5Z" fill="#a8e0e8" opacity="0.75"/><path d="M369.2 703.5L370.3 698.7L371.3 703.5Z" fill="#c0d8ff" opacity="0.75"/><path d="M370.4 703.5L371.5 697.7L372.6 703.5Z" fill="#c0d8ff" opacity="0.75"/><path d="M371.6 703.5L372.6 698.9L373.6 703.5Z" fill="#96d98d" opacity="0.75"/><path d="M372.7 703.5L373.5 701.3L374.3 703.5Z" fill="#ca95e5" opacity="0.75"/><path d="M373.6 703.5L374.8 700.8L376.1 703.5Z" fill="#8ab8ff" opacity="0.75"/><path d="M374.9 703.5L375.9 699.5L376.8 703.5Z" fill="#f0c8d8" opacity="0.75"/><path d="M376.0 703.5L376.7 700.3L377.4 703.5Z" fill="#c0d8ff" opacity="0.75"/><path d="M376.8 703.5L377.6 700.2L378.5 703.5Z" fill="#ca95e5" opacity="0.75"/><path d="M377.7 703.5L378.4 700.1L379.1 703.5Z" fill="#ffb357" opacity="0.75"/><path d="M378.5 703.5L379.1 700.4L379.8 703.5Z" fill="#ca95e5" opacity="0.75"/><path d="M379.2 703.5L380.1 697.0L380.9 703.5Z" fill="#f2495c" opacity="0.75"/><path d="M380.2 703.5L381.1 700.8L382.1 703.5Z" fill="#73bf69" opacity="0.75"/><path d="M381.2 703.5L381.9 699.2L382.5 703.5Z" fill="#ca95e5" opacity="0.75"/><path d="M381.9 703.5L382.6 697.1L383.3 703.5Z" fill="#73bf69" opacity="0.75"/><path d="M382.7 703.5L383.4 700.6L384.0 703.5Z" fill="#a8e0e8" opacity="0.75"/><path d="M383.4 703.5L384.3 697.2L385.2 703.5Z" fill="#ca95e5" opacity="0.75"/><path d="M384.4 703.5L385.3 698.9L386.3 703.5Z" fill="#fade2a" opacity="0.75"/><path d="M385.4 703.5L386.4 699.2L387.3 703.5Z" fill="#a8e0e8" opacity="0.75"/><path d="M386.5 703.5L387.5 699.3L388.6 703.5Z" fill="#ca95e5" opacity="0.75"/><path d="M387.7 703.5L388.4 700.8L389.2 703.5Z" fill="#ca95e5" opacity="0.75"/><path d="M388.5 703.5L389.7 700.1L391.0 703.5Z" fill="#e0f0d0" opacity="0.75"/><path d="M389.8 703.5L390.6 698.3L391.4 703.5Z" fill="#fade2a" opacity="0.75"/><path d="M390.7 703.5L391.9 698.4L393.1 703.5Z" fill="#f0c8d8" opacity="0.75"/><path d="M392.0 703.5L392.6 699.3L393.2 703.5Z" fill="#f0c8d8" opacity="0.75"/><path d="M392.7 703.5L393.7 700.0L394.8 703.5Z" fill="#ca95e5" opacity="0.75"/><path d="M393.8 703.5L395.0 701.4L396.2 703.5Z" fill="#f2495c" opacity="0.75"/><path d="M395.2 703.5L396.4 700.9L397.7 703.5Z" fill="#8ab8ff" opacity="0.75"/><path d="M396.6 703.5L397.6 700.5L398.6 703.5Z" fill="#e0f0d0" opacity="0.75"/><path d="M397.7 703.5L398.7 697.6L399.8 703.5Z" fill="#73bf69" opacity="0.75"/><path d="M398.8 703.5L399.8 698.8L400.7 703.5Z" fill="#f0c8d8" opacity="0.75"/><path d="M399.8 703.5L401.1 699.6L402.3 703.5Z" fill="#ca95e5" opacity="0.75"/><path d="M401.2 703.5L402.4 698.0L403.7 703.5Z" fill="#73bf69" opacity="0.75"/><path d="M402.5 703.5L403.2 697.7L403.8 703.5Z" fill="#ff9830" opacity="0.75"/><path d="M403.2 703.5L404.0 699.8L404.7 703.5Z" fill="#8ab8ff" opacity="0.75"/><path d="M404.1 703.5L405.0 698.4L406.0 703.5Z" fill="#8ab8ff" opacity="0.75"/><path d="M405.1 703.5L405.7 698.2L406.4 703.5Z" fill="#fade2a" opacity="0.75"/><path d="M405.8 703.5L406.6 701.2L407.5 703.5Z" fill="#f2495c" opacity="0.75"/><path d="M406.7 703.5L407.7 699.6L408.7 703.5Z" fill="#96d98d" opacity="0.75"/><path d="M407.8 703.5L408.9 698.5L410.1 703.5Z" fill="#ffb357" opacity="0.75"/><path d="M409.0 703.5L410.3 697.3L411.6 703.5Z" fill="#e0f0d0" opacity="0.75"/><path d="M410.5 703.5L411.4 699.1L412.4 703.5Z" fill="#ff9830" opacity="0.75"/><path d="M411.5 703.5L412.3 701.2L413.1 703.5Z" fill="#b877d9" opacity="0.75"/><path d="M412.4 703.5L413.2 697.3L414.1 703.5Z" fill="#5794f2" opacity="0.75"/><path d="M413.3 703.5L414.1 700.9L414.9 703.5Z" fill="#ffb357" opacity="0.75"/><path d="M414.2 703.5L415.1 698.8L416.0 703.5Z" fill="#96d98d" opacity="0.75"/><path d="M415.2 703.5L416.4 697.4L417.7 703.5Z" fill="#96d98d" opacity="0.75"/><path d="M416.6 703.5L417.6 700.4L418.7 703.5Z" fill="#ca95e5" opacity="0.75"/><path d="M417.8 703.5L419.0 699.3L420.2 703.5Z" fill="#c0d8ff" opacity="0.75"/><path d="M419.1 703.5L420.1 701.5L421.1 703.5Z" fill="#ff9830" opacity="0.75"/><path d="M420.2 703.5L420.9 701.4L421.7 703.5Z" fill="#8ab8ff" opacity="0.75"/><path d="M421.0 703.5L422.0 698.2L423.0 703.5Z" fill="#e0f0d0" opacity="0.75"/><path d="M422.1 703.5L423.3 698.2L424.6 703.5Z" fill="#73bf69" opacity="0.75"/><path d="M423.5 703.5L424.6 699.1L425.7 703.5Z" fill="#fade2a" opacity="0.75"/><path d="M424.7 703.5L425.9 697.9L427.2 703.5Z" fill="#73bf69" opacity="0.75"/><path d="M426.1 703.5L427.0 697.0L428.0 703.5Z" fill="#c0d8ff" opacity="0.75"/><path d="M427.1 703.5L428.1 697.6L429.0 703.5Z" fill="#c0d8ff" opacity="0.75"/><path d="M428.1 703.5L429.3 698.1L430.4 703.5Z" fill="#ff9830" opacity="0.75"/><path d="M429.4 703.5L430.5 695.3L431.6 703.5Z" fill="#8ab8ff" opacity="0.75"/><path d="M430.6 703.5L431.4 699.6L432.1 703.5Z" fill="#b877d9" opacity="0.75"/><path d="M431.4 703.5L432.1 698.8L432.7 703.5Z" fill="#fade2a" opacity="0.75"/><path d="M432.2 703.5L432.9 698.1L433.6 703.5Z" fill="#c0d8ff" opacity="0.75"/><path d="M433.0 703.5L434.2 701.2L435.4 703.5Z" fill="#5794f2" opacity="0.75"/><path d="M434.3 703.5L435.1 698.0L435.9 703.5Z" fill="#ffb357" opacity="0.75"/><path d="M435.2 703.5L436.2 700.3L437.2 703.5Z" fill="#ff9830" opacity="0.75"/><path d="M436.3 703.5L437.1 700.6L437.9 703.5Z" fill="#96d98d" opacity="0.75"/><path d="M437.2 703.5L437.9 700.0L438.7 703.5Z" fill="#b877d9" opacity="0.75"/><path d="M438.0 703.5L438.8 699.8L439.6 703.5Z" fill="#f2495c" opacity="0.75"/><path d="M438.9 703.5L439.9 697.4L441.0 703.5Z" fill="#ca95e5" opacity="0.75"/><path d="M440.0 703.5L441.2 699.0L442.5 703.5Z" fill="#ffb357" opacity="0.75"/><path d="M441.4 703.5L442.6 700.5L443.9 703.5Z" fill="#ca95e5" opacity="0.75"/><path d="M442.8 703.5L443.4 698.0L444.1 703.5Z" fill="#c0d8ff" opacity="0.75"/><path d="M443.5 703.5L444.8 700.0L446.0 703.5Z" fill="#b877d9" opacity="0.75"/><path d="M444.9 703.5L445.6 698.3L446.4 703.5Z" fill="#fade2a" opacity="0.75"/><path d="M445.7 703.5L446.7 701.4L447.7 703.5Z" fill="#e0f0d0" opacity="0.75"/><path d="M446.8 703.5L447.7 700.8L448.5 703.5Z" fill="#b877d9" opacity="0.75"/><path d="M447.7 703.5L448.5 699.8L449.3 703.5Z" fill="#b877d9" opacity="0.75"/><path d="M448.6 703.5L449.4 701.3L450.2 703.5Z" fill="#b877d9" opacity="0.75"/><path d="M449.5 703.5L450.1 699.6L450.8 703.5Z" fill="#a8e0e8" opacity="0.75"/><path d="M450.2 703.5L451.3 697.3L452.3 703.5Z" fill="#e0f0d0" opacity="0.75"/><path d="M451.4 703.5L452.5 700.4L453.6 703.5Z" fill="#f2495c" opacity="0.75"/><path d="M452.6 703.5L453.4 700.1L454.2 703.5Z" fill="#8ab8ff" opacity="0.75"/><path d="M453.5 703.5L454.8 697.6L456.1 703.5Z" fill="#5794f2" opacity="0.75"/><path d="M454.9 703.5L456.1 695.5L457.2 703.5Z" fill="#5794f2" opacity="0.75"/><path d="M456.2 703.5L457.1 699.2L458.1 703.5Z" fill="#ca95e5" opacity="0.75"/><path d="M457.2 703.5L458.4 699.2L459.5 703.5Z" fill="#f0c8d8" opacity="0.75"/><path d="M458.5 703.5L459.8 700.0L461.1 703.5Z" fill="#73bf69" opacity="0.75"/><path d="M459.9 703.5L460.8 699.4L461.8 703.5Z" fill="#c0d8ff" opacity="0.75"/><path d="M460.9 703.5L461.5 698.3L462.2 703.5Z" fill="#73bf69" opacity="0.75"/><path d="M461.6 703.5L462.3 698.4L462.9 703.5Z" fill="#e0f0d0" opacity="0.75"/><path d="M462.3 703.5L463.2 698.0L464.0 703.5Z" fill="#8ab8ff" opacity="0.75"/><path d="M463.3 703.5L464.1 693.2L465.0 703.5Z" fill="#ca95e5" opacity="0.75"/><path d="M464.2 703.5L465.1 700.5L466.0 703.5Z" fill="#a8e0e8" opacity="0.75"/><path d="M465.2 703.5L466.4 698.1L467.7 703.5Z" fill="#fade2a" opacity="0.75"/><path d="M466.6 703.5L467.8 692.1L469.0 703.5Z" fill="#73bf69" opacity="0.75"/><path d="M467.9 703.5L468.9 695.9L469.8 703.5Z" fill="#a8e0e8" opacity="0.75"/><path d="M468.9 703.5L469.8 699.8L470.6 703.5Z" fill="#5794f2" opacity="0.75"/><path d="M469.9 703.5L470.7 701.0L471.5 703.5Z" fill="#96d98d" opacity="0.75"/><path d="M470.8 703.5L471.9 697.1L473.0 703.5Z" fill="#f0c8d8" opacity="0.75"/><path d="M472.0 703.5L473.0 699.7L474.0 703.5Z" fill="#ff9830" opacity="0.75"/><path d="M473.1 703.5L474.1 699.7L475.0 703.5Z" fill="#ca95e5" opacity="0.75"/><path d="M474.2 703.5L475.4 698.5L476.7 703.5Z" fill="#b877d9" opacity="0.75"/><path d="M475.6 703.5L476.3 697.8L477.0 703.5Z" fill="#f0c8d8" opacity="0.75"/><path d="M476.4 703.5L477.1 698.6L477.8 703.5Z" fill="#ff9830" opacity="0.75"/><path d="M477.2 703.5L478.3 698.4L479.4 703.5Z" fill="#96d98d" opacity="0.75"/><path d="M478.4 703.5L479.3 698.0L480.1 703.5Z" fill="#73bf69" opacity="0.75"/><path d="M479.3 703.5L480.5 700.4L481.7 703.5Z" fill="#ca95e5" opacity="0.75"/><path d="M480.7 703.5L481.6 699.6L482.6 703.5Z" fill="#73bf69" opacity="0.75"/><path d="M481.7 703.5L482.8 700.4L483.8 703.5Z" fill="#ffb357" opacity="0.75"/><path d="M482.9 703.5L484.1 697.3L485.3 703.5Z" fill="#73bf69" opacity="0.75"/><path d="M484.2 703.5L485.4 699.8L486.7 703.5Z" fill="#73bf69" opacity="0.75"/><path d="M485.5 703.5L486.6 700.1L487.7 703.5Z" fill="#96d98d" opacity="0.75"/><path d="M486.7 703.5L487.9 692.5L489.0 703.5Z" fill="#73bf69" opacity="0.75"/><path d="M488.0 703.5L488.7 698.3L489.5 703.5Z" fill="#73bf69" opacity="0.75"/><path d="M488.8 703.5L489.7 698.9L490.5 703.5Z" fill="#8ab8ff" opacity="0.75"/><path d="M489.8 703.5L490.4 700.8L491.1 703.5Z" fill="#ffb357" opacity="0.75"/><path d="M490.5 703.5L491.2 699.5L492.0 703.5Z" fill="#a8e0e8" opacity="0.75"/><path d="M491.3 703.5L492.4 700.0L493.4 703.5Z" fill="#ffb357" opacity="0.75"/><path d="M492.5 703.5L493.2 700.7L494.0 703.5Z" fill="#f2495c" opacity="0.75"/><path d="M493.3 703.5L494.2 699.4L495.2 703.5Z" fill="#f0c8d8" opacity="0.75"/><path d="M494.3 703.5L495.5 700.8L496.7 703.5Z" fill="#f2495c" opacity="0.75"/><path d="M495.6 703.5L496.4 697.1L497.2 703.5Z" fill="#c0d8ff" opacity="0.75"/><path d="M496.5 703.5L497.4 699.3L498.3 703.5Z" fill="#a8e0e8" opacity="0.75"/><path d="M497.5 703.5L498.5 699.1L499.5 703.5Z" fill="#96d98d" opacity="0.75"/><path d="M498.6 703.5L499.3 699.3L499.9 703.5Z" fill="#c0d8ff" opacity="0.75"/><path d="M499.3 703.5L500.6 701.1L501.9 703.5Z" fill="#fade2a" opacity="0.75"/><path d="M500.8 703.5L501.4 699.4L502.1 703.5Z" fill="#b877d9" opacity="0.75"/><path d="M501.5 703.5L502.5 698.4L503.4 703.5Z" fill="#ffb357" opacity="0.75"/><path d="M502.6 703.5L503.4 701.3L504.3 703.5Z" fill="#fade2a" opacity="0.75"/><path d="M503.5 703.5L504.1 697.7L504.7 703.5Z" fill="#ca95e5" opacity="0.75"/><path d="M504.2 703.5L505.3 699.0L506.4 703.5Z" fill="#b877d9" opacity="0.75"/><path d="M505.4 703.5L506.4 699.5L507.4 703.5Z" fill="#e0f0d0" opacity="0.75"/><path d="M506.5 703.5L507.2 699.1L508.0 703.5Z" fill="#ca95e5" opacity="0.75"/><path d="M507.3 703.5L508.3 701.2L509.2 703.5Z" fill="#f0c8d8" opacity="0.75"/><path d="M508.3 703.5L509.2 699.6L510.0 703.5Z" fill="#73bf69" opacity="0.75"/><path d="M509.3 703.5L509.9 700.2L510.5 703.5Z" fill="#c0d8ff" opacity="0.75"/><path d="M509.9 703.5L510.6 700.4L511.2 703.5Z" fill="#ffb357" opacity="0.75"/><path d="M510.7 703.5L511.6 701.4L512.6 703.5Z" fill="#ff9830" opacity="0.75"/><path d="M511.7 703.5L512.9 700.3L514.1 703.5Z" fill="#73bf69" opacity="0.75"/><path d="M513.0 703.5L513.8 700.3L514.7 703.5Z" fill="#f0c8d8" opacity="0.75"/><path d="M513.9 703.5L514.7 697.1L515.4 703.5Z" fill="#96d98d" opacity="0.75"/><path d="M514.7 703.5L515.8 701.4L516.8 703.5Z" fill="#a8e0e8" opacity="0.75"/><path d="M515.9 703.5L517.0 698.4L518.1 703.5Z" fill="#73bf69" opacity="0.75"/><path d="M517.1 703.5L518.4 697.2L519.6 703.5Z" fill="#b877d9" opacity="0.75"/><path d="M518.5 703.5L519.7 700.0L520.9 703.5Z" fill="#ca95e5" opacity="0.75"/><path d="M519.8 703.5L520.6 699.2L521.3 703.5Z" fill="#ff9830" opacity="0.75"/><path d="M520.7 703.5L521.7 698.2L522.7 703.5Z" fill="#fade2a" opacity="0.75"/><path d="M521.8 703.5L522.4 697.8L523.1 703.5Z" fill="#f2495c" opacity="0.75"/><path d="M522.5 703.5L523.7 700.0L525.0 703.5Z" fill="#ca95e5" opacity="0.75"/><path d="M523.9 703.5L524.9 699.8L526.0 703.5Z" fill="#e0f0d0" opacity="0.75"/><path d="M525.0 703.5L525.9 697.0L526.7 703.5Z" fill="#c0d8ff" opacity="0.75"/><path d="M525.9 703.5L526.8 691.2L527.7 703.5Z" fill="#c0d8ff" opacity="0.75"/><path d="M526.9 703.5L527.8 698.5L528.6 703.5Z" fill="#c0d8ff" opacity="0.75"/><path d="M527.8 703.5L528.9 699.7L529.9 703.5Z" fill="#73bf69" opacity="0.75"/><path d="M529.0 703.5L529.9 700.4L530.9 703.5Z" fill="#ff9830" opacity="0.75"/><path d="M530.0 703.5L531.0 694.3L531.9 703.5Z" fill="#73bf69" opacity="0.75"/><path d="M531.0 703.5L531.7 698.7L532.4 703.5Z" fill="#b877d9" opacity="0.75"/><path d="M531.8 703.5L532.8 700.4L533.9 703.5Z" fill="#e0f0d0" opacity="0.75"/><path d="M532.9 703.5L534.2 698.6L535.4 703.5Z" fill="#f2495c" opacity="0.75"/><path d="M534.3 703.5L535.0 696.3L535.7 703.5Z" fill="#b877d9" opacity="0.75"/><path d="M535.1 703.5L535.8 700.2L536.5 703.5Z" fill="#5794f2" opacity="0.75"/><path d="M535.8 703.5L536.9 691.7L537.9 703.5Z" fill="#f2495c" opacity="0.75"/><path d="M537.0 703.5L537.7 699.0L538.4 703.5Z" fill="#fade2a" opacity="0.75"/><path d="M537.8 703.5L538.8 697.8L539.9 703.5Z" fill="#ffb357" opacity="0.75"/><path d="M538.9 703.5L540.1 698.8L541.2 703.5Z" fill="#e0f0d0" opacity="0.75"/><path d="M540.2 703.5L541.1 698.7L542.1 703.5Z" fill="#73bf69" opacity="0.75"/><path d="M541.2 703.5L542.5 697.1L543.8 703.5Z" fill="#73bf69" opacity="0.75"/><path d="M542.7 703.5L543.5 700.5L544.4 703.5Z" fill="#f2495c" opacity="0.75"/><path d="M543.6 703.5L544.6 701.2L545.6 703.5Z" fill="#b877d9" opacity="0.75"/><path d="M544.7 703.5L545.9 701.0L547.0 703.5Z" fill="#fade2a" opacity="0.75"/><path d="M546.0 703.5L547.2 697.2L548.5 703.5Z" fill="#f2495c" opacity="0.75"/><path d="M547.3 703.5L548.1 701.5L548.9 703.5Z" fill="#e0f0d0" opacity="0.75"/><path d="M548.2 703.5L549.4 697.8L550.7 703.5Z" fill="#a8e0e8" opacity="0.75"/><path d="M549.6 703.5L550.4 698.1L551.2 703.5Z" fill="#fade2a" opacity="0.75"/><path d="M550.5 703.5L551.6 700.9L552.7 703.5Z" fill="#c0d8ff" opacity="0.75"/><path d="M551.7 703.5L552.8 699.6L553.9 703.5Z" fill="#f2495c" opacity="0.75"/><path d="M552.9 703.5L554.2 700.8L555.5 703.5Z" fill="#c0d8ff" opacity="0.75"/><path d="M554.3 703.5L555.0 698.8L555.7 703.5Z" fill="#8ab8ff" opacity="0.75"/><path d="M555.1 703.5L556.2 699.9L557.4 703.5Z" fill="#c0d8ff" opacity="0.75"/><path d="M556.4 703.5L557.2 698.5L558.0 703.5Z" fill="#ff9830" opacity="0.75"/><path d="M557.2 703.5L558.0 700.0L558.8 703.5Z" fill="#73bf69" opacity="0.75"/><path d="M558.1 703.5L558.9 698.6L559.7 703.5Z" fill="#ff9830" opacity="0.75"/><path d="M559.0 703.5L559.9 698.2L560.9 703.5Z" fill="#c0d8ff" opacity="0.75"/><path d="M560.0 703.5L560.9 691.0L561.7 703.5Z" fill="#5794f2" opacity="0.75"/><path d="M561.0 703.5L562.0 699.1L563.1 703.5Z" fill="#73bf69" opacity="0.75"/><path d="M562.1 703.5L562.8 700.2L563.4 703.5Z" fill="#96d98d" opacity="0.75"/><path d="M562.8 703.5L563.6 699.1L564.3 703.5Z" fill="#ca95e5" opacity="0.75"/><path d="M563.6 703.5L564.5 698.4L565.4 703.5Z" fill="#5794f2" opacity="0.75"/><path d="M564.6 703.5L565.7 700.5L566.8 703.5Z" fill="#c0d8ff" opacity="0.75"/><path d="M565.8 703.5L566.5 700.5L567.2 703.5Z" fill="#ff9830" opacity="0.75"/><path d="M566.6 703.5L567.3 699.7L568.0 703.5Z" fill="#b877d9" opacity="0.75"/><path d="M567.4 703.5L568.2 697.8L569.1 703.5Z" fill="#c0d8ff" opacity="0.75"/><path d="M568.3 703.5L569.4 698.6L570.5 703.5Z" fill="#5794f2" opacity="0.75"/><path d="M569.5 703.5L570.2 697.2L570.9 703.5Z" fill="#a8e0e8" opacity="0.75"/><path d="M570.3 703.5L571.0 698.2L571.8 703.5Z" fill="#a8e0e8" opacity="0.75"/><path d="M571.1 703.5L572.0 697.5L572.8 703.5Z" fill="#73bf69" opacity="0.75"/><path d="M572.1 703.5L573.0 697.5L573.9 703.5Z" fill="#a8e0e8" opacity="0.75"/><path d="M573.1 703.5L573.7 699.4L574.4 703.5Z" fill="#c0d8ff" opacity="0.75"/><path d="M573.8 703.5L574.9 700.9L576.0 703.5Z" fill="#5794f2" opacity="0.75"/><path d="M575.0 703.5L576.1 700.3L577.1 703.5Z" fill="#ffb357" opacity="0.75"/><path d="M576.2 703.5L577.2 698.1L578.3 703.5Z" fill="#ffb357" opacity="0.75"/><path d="M577.3 703.5L578.6 698.3L579.9 703.5Z" fill="#ca95e5" opacity="0.75"/><path d="M578.7 703.5L579.6 698.0L580.5 703.5Z" fill="#a8e0e8" opacity="0.75"/><path d="M579.7 703.5L580.5 699.7L581.3 703.5Z" fill="#ffb357" opacity="0.75"/><path d="M580.6 703.5L581.4 699.4L582.2 703.5Z" fill="#5794f2" opacity="0.75"/><path d="M581.4 703.5L582.5 701.5L583.6 703.5Z" fill="#f2495c" opacity="0.75"/><path d="M582.6 703.5L583.3 699.7L583.9 703.5Z" fill="#f2495c" opacity="0.75"/><path d="M583.3 703.5L584.2 701.1L585.1 703.5Z" fill="#b877d9" opacity="0.75"/><path d="M584.3 703.5L585.4 700.8L586.5 703.5Z" fill="#fade2a" opacity="0.75"/><path d="M585.5 703.5L586.1 698.8L586.8 703.5Z" fill="#ca95e5" opacity="0.75"/><path d="M586.2 703.5L587.5 699.0L588.7 703.5Z" fill="#fade2a" opacity="0.75"/><path d="M587.6 703.5L588.6 700.4L589.6 703.5Z" fill="#f2495c" opacity="0.75"/><path d="M588.7 703.5L589.5 698.7L590.3 703.5Z" fill="#e0f0d0" opacity="0.75"/><path d="M589.6 703.5L590.2 701.0L590.8 703.5Z" fill="#8ab8ff" opacity="0.75"/><path d="M590.3 703.5L591.0 697.5L591.7 703.5Z" fill="#e0f0d0" opacity="0.75"/><path d="M591.1 703.5L591.7 700.0L592.4 703.5Z" fill="#96d98d" opacity="0.75"/><path d="M591.8 703.5L592.5 701.4L593.2 703.5Z" fill="#73bf69" opacity="0.75"/><path d="M592.6 703.5L593.4 697.6L594.2 703.5Z" fill="#fade2a" opacity="0.75"/><path d="M593.5 703.5L594.5 701.4L595.5 703.5Z" fill="#b877d9" opacity="0.75"/><path d="M594.6 703.5L595.8 700.6L597.0 703.5Z" fill="#73bf69" opacity="0.75"/><path d="M595.9 703.5L597.2 697.8L598.4 703.5Z" fill="#f2495c" opacity="0.75"/><path d="M597.3 703.5L598.5 697.9L599.8 703.5Z" fill="#fade2a" opacity="0.75"/><path d="M598.7 703.5L599.6 697.7L600.4 703.5Z" fill="#8ab8ff" opacity="0.75"/><path d="M599.6 703.5L600.5 700.3L601.3 703.5Z" fill="#f0c8d8" opacity="0.75"/><path d="M600.5 703.5L601.8 700.7L603.1 703.5Z" fill="#a8e0e8" opacity="0.75"/><path d="M602.0 703.5L602.9 701.3L603.9 703.5Z" fill="#ff9830" opacity="0.75"/><path d="M603.0 703.5L603.8 699.3L604.5 703.5Z" fill="#c0d8ff" opacity="0.75"/><path d="M603.8 703.5L605.0 700.4L606.1 703.5Z" fill="#b877d9" opacity="0.75"/><path d="M605.1 703.5L606.3 701.2L607.5 703.5Z" fill="#fade2a" opacity="0.75"/><path d="M606.4 703.5L607.1 697.4L607.8 703.5Z" fill="#a8e0e8" opacity="0.75"/><path d="M607.1 703.5L608.0 700.8L608.9 703.5Z" fill="#ff9830" opacity="0.75"/><path d="M608.1 703.5L609.0 697.8L609.8 703.5Z" fill="#c0d8ff" opacity="0.75"/><path d="M609.1 703.5L609.8 697.4L610.6 703.5Z" fill="#ffb357" opacity="0.75"/><path d="M609.9 703.5L611.0 700.5L612.0 703.5Z" fill="#f0c8d8" opacity="0.75"/><path d="M611.1 703.5L612.3 698.8L613.6 703.5Z" fill="#5794f2" opacity="0.75"/><path d="M612.5 703.5L613.7 700.5L614.9 703.5Z" fill="#f2495c" opacity="0.75"/><path d="M613.8 703.5L614.7 698.6L615.5 703.5Z" fill="#f0c8d8" opacity="0.75"/><path d="M614.8 703.5L615.8 697.7L616.9 703.5Z" fill="#ca95e5" opacity="0.75"/><path d="M615.9 703.5L617.0 698.1L618.0 703.5Z" fill="#fade2a" opacity="0.75"/><path d="M617.1 703.5L618.4 697.8L619.7 703.5Z" fill="#c0d8ff" opacity="0.75"/><path d="M618.5 703.5L619.4 697.5L620.2 703.5Z" fill="#ca95e5" opacity="0.75"/><path d="M619.5 703.5L620.4 699.8L621.4 703.5Z" fill="#f0c8d8" opacity="0.75"/><path d="M620.5 703.5L621.7 698.0L622.8 703.5Z" fill="#5794f2" opacity="0.75"/><path d="M621.8 703.5L622.9 701.2L623.9 703.5Z" fill="#b877d9" opacity="0.75"/><path d="M623.0 703.5L624.1 698.4L625.3 703.5Z" fill="#ff9830" opacity="0.75"/><path d="M624.2 703.5L625.3 700.6L626.3 703.5Z" fill="#ff9830" opacity="0.75"/><path d="M625.4 703.5L626.0 698.9L626.6 703.5Z" fill="#e0f0d0" opacity="0.75"/><path d="M626.1 703.5L627.1 697.1L628.1 703.5Z" fill="#c0d8ff" opacity="0.75"/><path d="M627.2 703.5L628.1 698.4L629.1 703.5Z" fill="#96d98d" opacity="0.75"/><path d="M628.2 703.5L629.1 701.4L629.9 703.5Z" fill="#f0c8d8" opacity="0.75"/><path d="M629.2 703.5L630.4 699.6L631.6 703.5Z" fill="#f0c8d8" opacity="0.75"/><path d="M630.5 703.5L631.5 697.8L632.6 703.5Z" fill="#ffb357" opacity="0.75"/><path d="M631.6 703.5L632.3 698.8L633.0 703.5Z" fill="#5794f2" opacity="0.75"/><path d="M632.4 703.5L633.4 701.0L634.4 703.5Z" fill="#f0c8d8" opacity="0.75"/><path d="M633.5 703.5L634.4 697.2L635.3 703.5Z" fill="#5794f2" opacity="0.75"/><path d="M634.5 703.5L635.5 697.7L636.6 703.5Z" fill="#b877d9" opacity="0.75"/><path d="M635.7 703.5L636.8 700.4L638.0 703.5Z" fill="#c0d8ff" opacity="0.75"/><path d="M636.9 703.5L637.9 700.5L638.9 703.5Z" fill="#fade2a" opacity="0.75"/><path d="M638.0 703.5L639.2 700.4L640.4 703.5Z" fill="#f0c8d8" opacity="0.75"/><path d="M639.3 703.5L640.1 699.0L641.0 703.5Z" fill="#c0d8ff" opacity="0.75"/><path d="M640.2 703.5L641.2 699.8L642.2 703.5Z" fill="#fade2a" opacity="0.75"/><path d="M641.3 703.5L642.5 694.3L643.7 703.5Z" fill="#fade2a" opacity="0.75"/><path d="M642.6 703.5L643.9 698.0L645.1 703.5Z" fill="#ca95e5" opacity="0.75"/><path d="M644.0 703.5L645.1 699.7L646.3 703.5Z" fill="#b877d9" opacity="0.75"/><path d="M645.2 703.5L646.1 699.9L646.9 703.5Z" fill="#73bf69" opacity="0.75"/><path d="M646.2 703.5L646.9 700.0L647.7 703.5Z" fill="#8ab8ff" opacity="0.75"/><path d="M647.0 703.5L648.0 699.6L649.1 703.5Z" fill="#96d98d" opacity="0.75"/><path d="M648.1 703.5L648.7 701.4L649.3 703.5Z" fill="#b877d9" opacity="0.75"/><path d="M648.8 703.5L649.8 699.1L650.9 703.5Z" fill="#96d98d" opacity="0.75"/><path d="M649.9 703.5L650.7 700.4L651.4 703.5Z" fill="#c0d8ff" opacity="0.75"/><path d="M650.7 703.5L651.5 697.5L652.2 703.5Z" fill="#ff9830" opacity="0.75"/><path d="M651.6 703.5L652.8 696.1L654.0 703.5Z" fill="#5794f2" opacity="0.75"/><path d="M652.9 703.5L653.6 698.3L654.2 703.5Z" fill="#ffb357" opacity="0.75"/><path d="M653.7 703.5L654.8 699.0L655.9 703.5Z" fill="#96d98d" opacity="0.75"/><path d="M654.9 703.5L656.1 700.6L657.2 703.5Z" fill="#e0f0d0" opacity="0.75"/><path d="M656.2 703.5L657.4 701.4L658.6 703.5Z" fill="#8ab8ff" opacity="0.75"/><path d="M657.5 703.5L658.1 698.7L658.8 703.5Z" fill="#73bf69" opacity="0.75"/><path d="M658.2 703.5L659.2 701.0L660.2 703.5Z" fill="#ff9830" opacity="0.75"/><path d="M659.3 703.5L660.5 697.1L661.7 703.5Z" fill="#5794f2" opacity="0.75"/><path d="M660.6 703.5L661.3 700.5L661.9 703.5Z" fill="#ca95e5" opacity="0.75"/><path d="M661.3 703.5L662.5 698.7L663.7 703.5Z" fill="#fade2a" opacity="0.75"/><path d="M662.6 703.5L663.5 699.0L664.3 703.5Z" fill="#8ab8ff" opacity="0.75"/><path d="M663.6 703.5L664.7 700.6L665.8 703.5Z" fill="#ff9830" opacity="0.75"/><path d="M664.8 703.5L665.6 699.1L666.5 703.5Z" fill="#a8e0e8" opacity="0.75"/><path d="M665.7 703.5L666.5 699.0L667.4 703.5Z" fill="#96d98d" opacity="0.75"/><path d="M666.6 703.5L667.3 701.4L668.0 703.5Z" fill="#fade2a" opacity="0.75"/><path d="M667.4 703.5L668.6 699.7L669.8 703.5Z" fill="#fade2a" opacity="0.75"/><path d="M668.7 703.5L669.4 701.5L670.2 703.5Z" fill="#f0c8d8" opacity="0.75"/><path d="M669.5 703.5L670.3 699.1L671.0 703.5Z" fill="#fade2a" opacity="0.75"/><path d="M670.4 703.5L671.5 700.1L672.7 703.5Z" fill="#b877d9" opacity="0.75"/><path d="M671.7 703.5L672.9 699.3L674.1 703.5Z" fill="#f2495c" opacity="0.75"/><path d="M51.8 696.2H672.5" stroke="#9cb8c4" stroke-width="1.8" opacity="1"/><path d="M51.8 703.8H672.5" stroke="#d0dcc8" stroke-width="1.6" opacity="1"/><path d="M177.2 703.0 L177.2 592.0" fill="none" stroke="#2c5ca8" stroke-width="1.4" opacity="1" stroke-linejoin="round"/><path d="M325.0 703.0 L325.0 671.0" fill="none" stroke="#2c5ca8" stroke-width="1.2" opacity="1" stroke-linejoin="round"/><path d="M360.5 697.0 L361.0 689.0 L364.0 688.0 L368.0 689.0 L372.0 687.0 L376.0 688.0 L379.0 685.0 L380.0 683.0 L381.0 686.0 L383.0 688.0 L383.5 697.0" fill="none" stroke="#a8a0e0" stroke-width="1.0" opacity="1" stroke-linejoin="round"/><path d="M127.5 697.0 L129.0 688.0 L130.5 697.0" fill="none" stroke="#b8a8e8" stroke-width="1.2" opacity="1" stroke-linejoin="round"/><path d="M94.5 697.0 L95.5 692.0 L96.5 697.0" fill="none" stroke="#8ad0e8" stroke-width="1.0" opacity="1" stroke-linejoin="round"/><path d="M594.0 697.0 L595.5 687.0 L597.0 697.0" fill="none" stroke="#c0b8e8" stroke-width="1.1" opacity="1" stroke-linejoin="round"/><path d="M250.0 697.0 L251.0 693.0 L252.0 697.0" fill="none" stroke="#c0b8e8" stroke-width="1.0" opacity="1" stroke-linejoin="round"/><path d="M747.6 575.5H1367.0" stroke="#23262c" stroke-width="1" opacity="1"/><path d="M747.6 601.0H1367.0" stroke="#23262c" stroke-width="1" opacity="1"/><path d="M747.6 626.5H1367.0" stroke="#23262c" stroke-width="1" opacity="1"/><path d="M747.6 652.0H1367.0" stroke="#23262c" stroke-width="1" opacity="1"/><path d="M747.6 677.5H1367.0" stroke="#23262c" stroke-width="1" opacity="1"/><path d="M747.6 702.5H1367.0" stroke="#23262c" stroke-width="1" opacity="1"/><path d="M765.0 575.5V703.0" stroke="#23262c" stroke-width="1"/><path d="M842.5 575.5V703.0" stroke="#23262c" stroke-width="1"/><path d="M920.0 575.5V703.0" stroke="#23262c" stroke-width="1"/><path d="M997.5 575.5V703.0" stroke="#23262c" stroke-width="1"/><path d="M1075.0 575.5V703.0" stroke="#23262c" stroke-width="1"/><path d="M1152.5 575.5V703.0" stroke="#23262c" stroke-width="1"/><path d="M1230.0 575.5V703.0" stroke="#23262c" stroke-width="1"/><path d="M1306.5 575.5V703.0" stroke="#23262c" stroke-width="1"/><path d="M747.6 701.0 L750.6 700.4 L753.6 700.9 L756.6 700.4 L759.6 700.6 L762.6 700.5 L765.6 700.3 L768.6 700.3 L771.6 700.5 L774.6 697.9 L777.6 700.9 L780.6 697.7 L783.6 700.1 L786.6 700.9 L789.6 698.5 L792.6 700.5 L795.6 700.4 L798.6 700.9 L801.6 700.0 L804.6 700.2 L807.6 701.1 L810.6 700.8 L813.6 700.3 L816.6 701.0 L819.6 700.5 L822.6 701.0 L825.6 700.9 L828.6 700.6 L831.6 700.6 L834.6 699.9 L837.6 701.0 L840.6 701.0 L843.6 700.0 L846.6 700.9 L849.6 700.3 L852.6 700.4 L855.6 700.8 L858.6 700.4 L861.6 701.0 L864.6 700.7 L867.6 700.4 L870.6 700.1 L873.6 700.4 L876.6 700.9 L879.6 700.6 L882.6 700.1 L885.6 700.5 L888.6 700.1 L891.6 699.9 L894.6 700.9 L897.6 700.7 L900.6 701.0 L903.6 700.7 L906.6 700.3 L909.6 700.1 L912.6 701.1 L915.6 701.0 L918.6 700.0 L921.6 700.0 L924.6 700.6 L927.6 700.2 L930.6 700.6 L933.6 700.3 L936.6 700.8 L939.6 700.6 L942.6 700.8 L945.6 700.2 L948.6 700.1 L951.6 697.8 L954.6 700.4 L957.6 700.3 L960.6 701.0 L963.6 700.8 L966.6 700.4 L969.6 697.9 L972.6 700.7 L975.6 700.1 L978.6 700.4 L981.6 701.1 L984.6 700.4 L987.6 700.4 L990.6 700.1 L993.6 700.9 L996.6 700.1 L999.6 701.0 L1002.6 700.1 L1005.6 700.9 L1008.6 700.1 L1011.6 700.7 L1014.6 700.1 L1017.6 700.1 L1020.6 700.7 L1023.6 701.1 L1026.6 700.6 L1029.6 700.5 L1032.6 700.0 L1035.6 700.9 L1038.6 700.8 L1041.6 700.6 L1044.6 700.9 L1047.6 700.0 L1050.6 700.3 L1053.6 700.5 L1056.6 699.9 L1059.6 700.2 L1062.6 700.7 L1065.6 700.6 L1068.6 700.0 L1071.6 700.3 L1074.6 701.0 L1077.6 700.8 L1080.6 700.0 L1083.6 697.9 L1086.6 700.7 L1089.6 700.3 L1092.6 700.5 L1095.6 700.7 L1098.6 700.9 L1101.6 700.7 L1104.6 700.4 L1107.6 701.0 L1110.6 700.9 L1113.6 700.1 L1116.6 700.4 L1119.6 700.2 L1122.6 700.9 L1125.6 700.6 L1128.6 700.0 L1131.6 700.5 L1134.6 700.3 L1137.6 700.0 L1140.6 700.9 L1143.6 699.9 L1146.6 700.1 L1149.6 700.4 L1152.6 701.1 L1155.6 700.2 L1158.6 700.8 L1161.6 700.3 L1164.6 700.9 L1167.6 700.5 L1170.6 700.2 L1173.6 700.6 L1176.6 700.1 L1179.6 700.8 L1182.6 700.9 L1185.6 700.4 L1188.6 698.0 L1191.6 701.1 L1194.6 700.1 L1197.6 700.8 L1200.6 700.1 L1203.6 700.9 L1206.6 700.7 L1209.6 700.0 L1212.6 700.1 L1215.6 700.0 L1218.6 701.1 L1221.6 700.5 L1224.6 701.0 L1227.6 700.3 L1230.6 701.1 L1233.6 697.7 L1236.6 700.1 L1239.6 700.4 L1242.6 701.0 L1245.6 700.1 L1248.6 700.5 L1251.6 700.6 L1254.6 700.2 L1257.6 700.3 L1260.6 700.9 L1263.6 700.3 L1266.6 700.5 L1269.6 700.2 L1272.6 700.9 L1275.6 700.2 L1278.6 697.6 L1281.6 700.9 L1284.6 700.0 L1287.6 700.2 L1290.6 700.2 L1293.6 700.3 L1296.6 700.0 L1299.6 700.4 L1302.6 700.6 L1305.6 700.2 L1308.6 700.4 L1311.6 700.4 L1314.6 700.5 L1317.6 700.0 L1320.6 700.2 L1323.6 700.5 L1326.6 700.9 L1329.6 700.0 L1332.6 700.5 L1335.6 701.1 L1338.6 700.0 L1341.6 700.6 L1344.6 700.2 L1347.6 700.3 L1350.6 700.9 L1353.6 698.2 L1356.6 699.9 L1359.6 701.0 L1362.6 700.6 L1365.6 700.4" fill="none" stroke="#73bf69" stroke-width="0.9" opacity="0.8" stroke-linejoin="round"/><path d="M747.6 700.5 L750.6 700.1 L753.6 700.7 L756.6 700.1 L759.6 700.8 L762.6 700.3 L765.6 700.4 L768.6 700.4 L771.6 700.2 L774.6 701.1 L777.6 700.1 L780.6 701.0 L783.6 700.6 L786.6 701.0 L789.6 700.6 L792.6 700.5 L795.6 701.1 L798.6 700.5 L801.6 700.0 L804.6 700.5 L807.6 701.0 L810.6 700.6 L813.6 700.7 L816.6 700.1 L819.6 700.7 L822.6 700.0 L825.6 700.0 L828.6 700.7 L831.6 701.0 L834.6 701.0 L837.6 698.2 L840.6 700.0 L843.6 700.1 L846.6 700.1 L849.6 700.3 L852.6 700.5 L855.6 700.2 L858.6 700.0 L861.6 700.4 L864.6 700.3 L867.6 700.1 L870.6 701.1 L873.6 700.8 L876.6 700.2 L879.6 700.8 L882.6 700.2 L885.6 700.1 L888.6 699.9 L891.6 699.9 L894.6 700.8 L897.6 700.2 L900.6 700.1 L903.6 701.0 L906.6 700.1 L909.6 699.9 L912.6 700.8 L915.6 700.6 L918.6 700.2 L921.6 700.0 L924.6 700.2 L927.6 700.4 L930.6 700.9 L933.6 700.2 L936.6 700.1 L939.6 700.3 L942.6 698.3 L945.6 700.8 L948.6 700.3 L951.6 700.3 L954.6 698.1 L957.6 701.0 L960.6 701.0 L963.6 700.7 L966.6 697.8 L969.6 700.1 L972.6 700.6 L975.6 700.9 L978.6 700.5 L981.6 700.5 L984.6 700.5 L987.6 700.0 L990.6 700.3 L993.6 700.8 L996.6 700.3 L999.6 700.5 L1002.6 700.6 L1005.6 700.1 L1008.6 700.5 L1011.6 700.1 L1014.6 700.0 L1017.6 700.8 L1020.6 700.2 L1023.6 701.1 L1026.6 700.9 L1029.6 700.3 L1032.6 700.2 L1035.6 698.0 L1038.6 700.8 L1041.6 700.4 L1044.6 698.3 L1047.6 700.9 L1050.6 700.6 L1053.6 700.3 L1056.6 700.4 L1059.6 700.1 L1062.6 700.0 L1065.6 701.1 L1068.6 700.3 L1071.6 700.8 L1074.6 701.1 L1077.6 699.9 L1080.6 700.4 L1083.6 701.1 L1086.6 700.3 L1089.6 700.6 L1092.6 700.2 L1095.6 700.5 L1098.6 700.2 L1101.6 700.3 L1104.6 700.5 L1107.6 700.7 L1110.6 700.1 L1113.6 700.7 L1116.6 700.3 L1119.6 701.1 L1122.6 701.1 L1125.6 700.6 L1128.6 701.1 L1131.6 700.4 L1134.6 701.0 L1137.6 700.2 L1140.6 700.1 L1143.6 700.0 L1146.6 700.9 L1149.6 701.1 L1152.6 701.0 L1155.6 700.5 L1158.6 700.3 L1161.6 700.4 L1164.6 700.9 L1167.6 700.8 L1170.6 697.9 L1173.6 700.5 L1176.6 700.8 L1179.6 700.4 L1182.6 700.1 L1185.6 700.5 L1188.6 700.0 L1191.6 700.0 L1194.6 700.4 L1197.6 699.9 L1200.6 700.2 L1203.6 699.9 L1206.6 700.5 L1209.6 700.7 L1212.6 700.8 L1215.6 700.9 L1218.6 697.6 L1221.6 700.9 L1224.6 700.3 L1227.6 700.9 L1230.6 700.2 L1233.6 700.1 L1236.6 700.4 L1239.6 699.9 L1242.6 700.9 L1245.6 700.2 L1248.6 698.1 L1251.6 701.0 L1254.6 700.7 L1257.6 699.9 L1260.6 700.2 L1263.6 700.8 L1266.6 700.4 L1269.6 700.9 L1272.6 700.2 L1275.6 700.8 L1278.6 700.9 L1281.6 700.6 L1284.6 699.9 L1287.6 700.5 L1290.6 700.5 L1293.6 700.3 L1296.6 700.5 L1299.6 700.8 L1302.6 700.6 L1305.6 700.3 L1308.6 701.0 L1311.6 700.9 L1314.6 700.1 L1317.6 700.3 L1320.6 700.8 L1323.6 700.1 L1326.6 700.5 L1329.6 699.9 L1332.6 700.9 L1335.6 699.9 L1338.6 700.1 L1341.6 700.2 L1344.6 700.2 L1347.6 700.5 L1350.6 700.7 L1353.6 700.5 L1356.6 700.9 L1359.6 700.1 L1362.6 700.9 L1365.6 701.0" fill="none" stroke="#b877d9" stroke-width="0.9" opacity="0.8" stroke-linejoin="round"/><path d="M747.6 700.6 L750.6 700.2 L753.6 700.1 L756.6 700.3 L759.6 700.1 L762.6 699.9 L765.6 700.5 L768.6 700.0 L771.6 697.9 L774.6 701.0 L777.6 700.4 L780.6 700.5 L783.6 700.1 L786.6 700.2 L789.6 700.4 L792.6 700.9 L795.6 700.5 L798.6 700.0 L801.6 700.0 L804.6 700.9 L807.6 700.1 L810.6 700.3 L813.6 700.5 L816.6 701.0 L819.6 701.0 L822.6 700.2 L825.6 700.8 L828.6 701.0 L831.6 700.8 L834.6 700.6 L837.6 700.6 L840.6 700.4 L843.6 700.6 L846.6 700.5 L849.6 700.0 L852.6 700.3 L855.6 701.1 L858.6 700.2 L861.6 700.5 L864.6 700.6 L867.6 700.6 L870.6 700.0 L873.6 700.4 L876.6 700.1 L879.6 700.7 L882.6 700.7 L885.6 700.1 L888.6 700.3 L891.6 701.1 L894.6 700.8 L897.6 700.4 L900.6 700.0 L903.6 700.3 L906.6 700.2 L909.6 700.2 L912.6 700.7 L915.6 700.8 L918.6 700.1 L921.6 700.1 L924.6 700.5 L927.6 700.4 L930.6 700.1 L933.6 699.9 L936.6 700.4 L939.6 701.1 L942.6 697.8 L945.6 700.0 L948.6 701.0 L951.6 700.7 L954.6 700.6 L957.6 700.2 L960.6 700.9 L963.6 700.3 L966.6 700.8 L969.6 701.0 L972.6 700.7 L975.6 700.9 L978.6 700.9 L981.6 700.7 L984.6 700.2 L987.6 700.7 L990.6 700.7 L993.6 701.0 L996.6 701.0 L999.6 700.5 L1002.6 700.1 L1005.6 700.5 L1008.6 700.3 L1011.6 698.3 L1014.6 701.1 L1017.6 700.5 L1020.6 700.8 L1023.6 700.9 L1026.6 700.4 L1029.6 700.2 L1032.6 700.0 L1035.6 700.4 L1038.6 697.9 L1041.6 700.9 L1044.6 700.3 L1047.6 700.3 L1050.6 700.3 L1053.6 700.3 L1056.6 700.4 L1059.6 700.3 L1062.6 700.0 L1065.6 701.0 L1068.6 700.9 L1071.6 700.0 L1074.6 700.4 L1077.6 700.9 L1080.6 700.2 L1083.6 700.7 L1086.6 700.6 L1089.6 701.1 L1092.6 700.3 L1095.6 700.5 L1098.6 700.4 L1101.6 700.4 L1104.6 700.1 L1107.6 700.7 L1110.6 700.0 L1113.6 700.4 L1116.6 700.0 L1119.6 700.8 L1122.6 700.0 L1125.6 700.3 L1128.6 700.5 L1131.6 700.9 L1134.6 700.4 L1137.6 700.5 L1140.6 700.9 L1143.6 700.2 L1146.6 700.5 L1149.6 700.3 L1152.6 700.0 L1155.6 700.8 L1158.6 701.0 L1161.6 700.0 L1164.6 701.1 L1167.6 700.9 L1170.6 700.2 L1173.6 700.7 L1176.6 700.1 L1179.6 699.9 L1182.6 700.1 L1185.6 701.1 L1188.6 700.6 L1191.6 700.4 L1194.6 700.7 L1197.6 700.2 L1200.6 700.9 L1203.6 700.9 L1206.6 700.5 L1209.6 701.0 L1212.6 700.9 L1215.6 700.4 L1218.6 700.4 L1221.6 700.4 L1224.6 700.2 L1227.6 700.9 L1230.6 700.8 L1233.6 700.9 L1236.6 698.1 L1239.6 700.1 L1242.6 700.3 L1245.6 700.1 L1248.6 700.5 L1251.6 700.8 L1254.6 700.5 L1257.6 700.7 L1260.6 700.5 L1263.6 701.1 L1266.6 701.0 L1269.6 701.1 L1272.6 700.2 L1275.6 701.0 L1278.6 700.7 L1281.6 700.1 L1284.6 700.7 L1287.6 699.9 L1290.6 700.9 L1293.6 700.3 L1296.6 700.2 L1299.6 700.6 L1302.6 701.1 L1305.6 700.4 L1308.6 700.1 L1311.6 700.6 L1314.6 700.5 L1317.6 701.1 L1320.6 700.4 L1323.6 701.1 L1326.6 700.5 L1329.6 700.7 L1332.6 700.8 L1335.6 698.1 L1338.6 700.1 L1341.6 701.0 L1344.6 701.0 L1347.6 700.5 L1350.6 700.5 L1353.6 701.1 L1356.6 700.4 L1359.6 700.6 L1362.6 700.3 L1365.6 700.2" fill="none" stroke="#ff9830" stroke-width="0.9" opacity="0.8" stroke-linejoin="round"/><path d="M747.6 701.0 L750.6 700.0 L753.6 701.0 L756.6 700.0 L759.6 700.7 L762.6 700.5 L765.6 700.7 L768.6 700.3 L771.6 700.0 L774.6 700.2 L777.6 700.9 L780.6 700.6 L783.6 700.4 L786.6 700.6 L789.6 700.0 L792.6 700.5 L795.6 700.2 L798.6 700.2 L801.6 700.8 L804.6 698.0 L807.6 700.8 L810.6 700.7 L813.6 700.6 L816.6 700.4 L819.6 700.8 L822.6 700.3 L825.6 700.7 L828.6 700.5 L831.6 700.4 L834.6 700.5 L837.6 700.1 L840.6 697.9 L843.6 700.4 L846.6 701.0 L849.6 700.1 L852.6 700.5 L855.6 700.2 L858.6 698.3 L861.6 700.6 L864.6 700.1 L867.6 700.7 L870.6 700.8 L873.6 700.6 L876.6 700.2 L879.6 700.4 L882.6 700.2 L885.6 700.5 L888.6 700.1 L891.6 700.4 L894.6 700.6 L897.6 700.4 L900.6 700.8 L903.6 697.9 L906.6 700.3 L909.6 700.5 L912.6 701.1 L915.6 701.0 L918.6 700.0 L921.6 700.1 L924.6 700.9 L927.6 698.0 L930.6 698.0 L933.6 700.0 L936.6 698.0 L939.6 700.9 L942.6 701.0 L945.6 700.3 L948.6 700.2 L951.6 700.6 L954.6 700.3 L957.6 700.3 L960.6 700.9 L963.6 700.8 L966.6 701.0 L969.6 700.3 L972.6 700.4 L975.6 700.1 L978.6 700.2 L981.6 701.0 L984.6 700.9 L987.6 701.0 L990.6 698.1 L993.6 700.6 L996.6 700.6 L999.6 700.1 L1002.6 701.0 L1005.6 700.7 L1008.6 700.0 L1011.6 699.9 L1014.6 700.5 L1017.6 700.1 L1020.6 700.5 L1023.6 700.3 L1026.6 700.5 L1029.6 700.3 L1032.6 700.2 L1035.6 700.6 L1038.6 700.0 L1041.6 700.5 L1044.6 698.2 L1047.6 700.0 L1050.6 700.0 L1053.6 700.5 L1056.6 701.0 L1059.6 701.0 L1062.6 700.5 L1065.6 701.0 L1068.6 700.6 L1071.6 699.9 L1074.6 700.3 L1077.6 700.6 L1080.6 700.3 L1083.6 701.0 L1086.6 700.1 L1089.6 700.6 L1092.6 699.9 L1095.6 700.9 L1098.6 701.1 L1101.6 700.7 L1104.6 700.8 L1107.6 700.9 L1110.6 700.7 L1113.6 700.2 L1116.6 697.7 L1119.6 700.7 L1122.6 700.6 L1125.6 700.2 L1128.6 700.0 L1131.6 701.1 L1134.6 700.4 L1137.6 700.5 L1140.6 701.0 L1143.6 700.4 L1146.6 700.4 L1149.6 700.5 L1152.6 698.5 L1155.6 700.3 L1158.6 700.7 L1161.6 700.2 L1164.6 700.9 L1167.6 700.4 L1170.6 700.8 L1173.6 698.5 L1176.6 700.3 L1179.6 700.2 L1182.6 700.7 L1185.6 700.1 L1188.6 698.5 L1191.6 700.6 L1194.6 700.1 L1197.6 700.0 L1200.6 701.0 L1203.6 700.3 L1206.6 697.9 L1209.6 700.4 L1212.6 700.6 L1215.6 700.3 L1218.6 700.8 L1221.6 700.1 L1224.6 700.8 L1227.6 701.1 L1230.6 700.8 L1233.6 700.4 L1236.6 700.2 L1239.6 700.7 L1242.6 698.4 L1245.6 701.0 L1248.6 701.1 L1251.6 700.3 L1254.6 701.1 L1257.6 700.3 L1260.6 700.5 L1263.6 701.0 L1266.6 699.9 L1269.6 700.2 L1272.6 700.8 L1275.6 700.8 L1278.6 700.8 L1281.6 700.9 L1284.6 701.1 L1287.6 700.9 L1290.6 700.4 L1293.6 700.6 L1296.6 700.9 L1299.6 700.9 L1302.6 700.9 L1305.6 700.5 L1308.6 700.2 L1311.6 700.3 L1314.6 700.1 L1317.6 700.7 L1320.6 700.5 L1323.6 701.0 L1326.6 700.7 L1329.6 700.3 L1332.6 700.9 L1335.6 700.1 L1338.6 700.1 L1341.6 700.3 L1344.6 700.8 L1347.6 701.0 L1350.6 700.0 L1353.6 700.4 L1356.6 700.3 L1359.6 700.5 L1362.6 700.0 L1365.6 700.7" fill="none" stroke="#5794f2" stroke-width="0.9" opacity="0.8" stroke-linejoin="round"/><path d="M770.8 701.0 L773.3 693.0 L773.8 682.0 L774.3 693.0 L776.8 701.0" fill="none" stroke="#6a4aa4" stroke-width="1.3" opacity="1" stroke-linejoin="round"/><path d="M778.5 701.0 L781.0 693.0 L781.5 682.0 L782.0 693.0 L784.5 701.0" fill="none" stroke="#98c88a" stroke-width="1.1" opacity="1" stroke-linejoin="round"/><path d="M816.5 701.0 L817.8 693.0 L818.3 682.0 L818.8 693.0 L820.1 701.0" fill="none" stroke="#98c88a" stroke-width="1.1" opacity="1" stroke-linejoin="round"/><path d="M832.0 701.0 L833.7 693.0 L834.2 600.0 L834.7 693.0 L836.4 701.0" fill="none" stroke="#6a4aa4" stroke-width="1.3" opacity="1" stroke-linejoin="round"/><path d="M838.4 701.0 L840.9 693.0 L841.4 686.0 L841.9 693.0 L844.4 701.0" fill="none" stroke="#98c88a" stroke-width="1.1" opacity="1" stroke-linejoin="round"/><path d="M858.2 701.0 L859.5 693.0 L860.0 691.0 L860.5 693.0 L861.8 701.0" fill="none" stroke="#98c88a" stroke-width="1.1" opacity="1" stroke-linejoin="round"/><path d="M888.1 701.0 L889.8 693.0 L890.3 623.0 L890.8 693.0 L892.5 701.0" fill="none" stroke="#6a4aa4" stroke-width="1.3" opacity="1" stroke-linejoin="round"/><path d="M895.0 701.0 L897.5 693.0 L898.0 684.0 L898.5 693.0 L901.0 701.0" fill="none" stroke="#98c88a" stroke-width="1.1" opacity="1" stroke-linejoin="round"/><path d="M903.5 701.0 L905.2 693.0 L905.7 695.0 L906.2 693.0 L907.9 701.0" fill="none" stroke="#6ac0d8" stroke-width="1.1" opacity="1" stroke-linejoin="round"/><path d="M945.2 701.0 L946.9 693.0 L947.4 615.3 L947.9 693.0 L949.6 701.0" fill="none" stroke="#6a4aa4" stroke-width="1.3" opacity="1" stroke-linejoin="round"/><path d="M952.9 701.0 L954.8 693.0 L955.3 618.4 L955.8 693.0 L957.7 701.0" fill="none" stroke="#98c88a" stroke-width="1.1" opacity="1" stroke-linejoin="round"/><path d="M1001.2 701.0 L1002.9 693.0 L1003.4 595.5 L1003.9 693.0 L1005.6 701.0" fill="none" stroke="#6a4aa4" stroke-width="1.3" opacity="1" stroke-linejoin="round"/><path d="M1009.5 701.0 L1011.4 693.0 L1011.9 617.3 L1012.4 693.0 L1014.3 701.0" fill="none" stroke="#98c88a" stroke-width="1.1" opacity="1" stroke-linejoin="round"/><path d="M1058.3 701.0 L1060.0 693.0 L1060.5 686.0 L1061.0 693.0 L1062.7 701.0" fill="none" stroke="#6a4aa4" stroke-width="1.3" opacity="1" stroke-linejoin="round"/><path d="M1067.5 701.0 L1070.0 693.0 L1070.5 683.0 L1071.0 693.0 L1073.5 701.0" fill="none" stroke="#98c88a" stroke-width="1.1" opacity="1" stroke-linejoin="round"/><path d="M1079.2 701.0 L1080.5 693.0 L1081.0 690.0 L1081.5 693.0 L1082.8 701.0" fill="none" stroke="#6a4aa4" stroke-width="1.3" opacity="1" stroke-linejoin="round"/><path d="M1119.6 701.0 L1121.2 693.0 L1121.8 624.5 L1122.2 693.0 L1123.9 701.0" fill="none" stroke="#6a4aa4" stroke-width="1.3" opacity="1" stroke-linejoin="round"/><path d="M1127.8 701.0 L1129.5 693.0 L1130.0 667.5 L1130.5 693.0 L1132.2 701.0" fill="none" stroke="#98c88a" stroke-width="1.1" opacity="1" stroke-linejoin="round"/><path d="M1179.8 701.0 L1181.5 693.0 L1182.0 589.5 L1182.5 693.0 L1184.2 701.0" fill="none" stroke="#6a4aa4" stroke-width="1.3" opacity="1" stroke-linejoin="round"/><path d="M1188.9 701.0 L1190.8 693.0 L1191.2 603.0 L1191.8 693.0 L1193.6 701.0" fill="none" stroke="#98c88a" stroke-width="1.1" opacity="1" stroke-linejoin="round"/><path d="M1222.9 701.0 L1224.0 693.0 L1224.5 625.0 L1225.0 693.0 L1226.1 701.0" fill="none" stroke="#e8802c" stroke-width="1.1" opacity="1" stroke-linejoin="round"/><path d="M1245.9 701.0 L1247.0 693.0 L1247.5 613.8 L1248.0 693.0 L1249.1 701.0" fill="none" stroke="#8a2424" stroke-width="1.1" opacity="1" stroke-linejoin="round"/><path d="M1247.8 701.0 L1249.5 693.0 L1250.0 589.5 L1250.5 693.0 L1252.2 701.0" fill="none" stroke="#98c88a" stroke-width="1.1" opacity="1" stroke-linejoin="round"/><path d="M1257.4 701.0 L1258.5 693.0 L1259.0 627.0 L1259.5 693.0 L1260.6 701.0" fill="none" stroke="#e8802c" stroke-width="1.1" opacity="1" stroke-linejoin="round"/><path d="M1297.0 701.0 L1299.5 693.0 L1300.0 688.8 L1300.5 693.0 L1303.0 701.0" fill="none" stroke="#6a4aa4" stroke-width="1.3" opacity="1" stroke-linejoin="round"/><path d="M1307.6 701.0 L1309.5 693.0 L1310.0 621.2 L1310.5 693.0 L1312.4 701.0" fill="none" stroke="#98c88a" stroke-width="1.1" opacity="1" stroke-linejoin="round"/><path d="M1358.6 701.0 L1360.2 693.0 L1360.8 598.8 L1361.2 693.0 L1362.9 701.0" fill="none" stroke="#6a4aa4" stroke-width="1.3" opacity="1" stroke-linejoin="round"/><path d="M1215.2 701L1215.8 590L1216.5 576.5L1217.6 575.5L1218.6 578L1219 701Z" fill="#5aa8c0" stroke="#5aa8c0" stroke-width="0.8"/><path d="M1216.8 701.0 L1216.8 660.0" fill="none" stroke="#c8a080" stroke-width="0.8" opacity="1" stroke-linejoin="round"/><path d="M767.9 701.0 L768.5 699.6 L769.1 701.0" fill="none" stroke="#90c088" stroke-width="0.9" opacity="0.8" stroke-linejoin="round"/><path d="M773.5 701.0 L774.1 699.2 L774.7 701.0" fill="none" stroke="#90c088" stroke-width="0.9" opacity="0.8" stroke-linejoin="round"/><path d="M776.9 701.0 L777.5 699.5 L778.1 701.0" fill="none" stroke="#90c088" stroke-width="0.9" opacity="0.8" stroke-linejoin="round"/><path d="M790.1 701.0 L790.7 699.0 L791.3 701.0" fill="none" stroke="#90c088" stroke-width="0.9" opacity="0.8" stroke-linejoin="round"/><path d="M812.6 701.0 L813.2 696.4 L813.8 701.0" fill="none" stroke="#90c088" stroke-width="0.9" opacity="0.8" stroke-linejoin="round"/><path d="M817.3 701.0 L817.9 697.1 L818.5 701.0" fill="none" stroke="#90c088" stroke-width="0.9" opacity="0.8" stroke-linejoin="round"/><path d="M821.4 701.0 L822.0 699.3 L822.6 701.0" fill="none" stroke="#90c088" stroke-width="0.9" opacity="0.8" stroke-linejoin="round"/><path d="M866.4 701.0 L867.0 698.4 L867.6 701.0" fill="none" stroke="#90c088" stroke-width="0.9" opacity="0.8" stroke-linejoin="round"/><path d="M882.1 701.0 L882.7 697.6 L883.3 701.0" fill="none" stroke="#90c088" stroke-width="0.9" opacity="0.8" stroke-linejoin="round"/><path d="M895.9 701.0 L896.5 696.9 L897.1 701.0" fill="none" stroke="#90c088" stroke-width="0.9" opacity="0.8" stroke-linejoin="round"/><path d="M906.1 701.0 L906.7 696.5 L907.3 701.0" fill="none" stroke="#90c088" stroke-width="0.9" opacity="0.8" stroke-linejoin="round"/><path d="M915.0 701.0 L915.6 697.2 L916.2 701.0" fill="none" stroke="#90c088" stroke-width="0.9" opacity="0.8" stroke-linejoin="round"/><path d="M956.9 701.0 L957.5 698.4 L958.1 701.0" fill="none" stroke="#90c088" stroke-width="0.9" opacity="0.8" stroke-linejoin="round"/><path d="M961.9 701.0 L962.5 696.8 L963.1 701.0" fill="none" stroke="#90c088" stroke-width="0.9" opacity="0.8" stroke-linejoin="round"/><path d="M971.0 701.0 L971.6 697.1 L972.2 701.0" fill="none" stroke="#90c088" stroke-width="0.9" opacity="0.8" stroke-linejoin="round"/><path d="M975.4 701.0 L976.0 699.1 L976.6 701.0" fill="none" stroke="#90c088" stroke-width="0.9" opacity="0.8" stroke-linejoin="round"/><path d="M984.2 701.0 L984.8 699.0 L985.4 701.0" fill="none" stroke="#90c088" stroke-width="0.9" opacity="0.8" stroke-linejoin="round"/><path d="M1002.5 701.0 L1003.1 697.1 L1003.7 701.0" fill="none" stroke="#90c088" stroke-width="0.9" opacity="0.8" stroke-linejoin="round"/><path d="M1017.1 701.0 L1017.7 697.4 L1018.3 701.0" fill="none" stroke="#90c088" stroke-width="0.9" opacity="0.8" stroke-linejoin="round"/><path d="M1041.0 701.0 L1041.6 699.6 L1042.2 701.0" fill="none" stroke="#90c088" stroke-width="0.9" opacity="0.8" stroke-linejoin="round"/><path d="M1043.4 701.0 L1044.0 697.4 L1044.6 701.0" fill="none" stroke="#90c088" stroke-width="0.9" opacity="0.8" stroke-linejoin="round"/><path d="M1064.0 701.0 L1064.6 697.8 L1065.2 701.0" fill="none" stroke="#90c088" stroke-width="0.9" opacity="0.8" stroke-linejoin="round"/><path d="M1087.6 701.0 L1088.2 696.7 L1088.8 701.0" fill="none" stroke="#90c088" stroke-width="0.9" opacity="0.8" stroke-linejoin="round"/><path d="M1113.3 701.0 L1113.9 698.3 L1114.5 701.0" fill="none" stroke="#90c088" stroke-width="0.9" opacity="0.8" stroke-linejoin="round"/><path d="M1138.8 701.0 L1139.4 698.4 L1140.0 701.0" fill="none" stroke="#90c088" stroke-width="0.9" opacity="0.8" stroke-linejoin="round"/><path d="M1156.7 701.0 L1157.3 699.9 L1157.9 701.0" fill="none" stroke="#90c088" stroke-width="0.9" opacity="0.8" stroke-linejoin="round"/><path d="M1163.3 701.0 L1163.9 697.5 L1164.5 701.0" fill="none" stroke="#90c088" stroke-width="0.9" opacity="0.8" stroke-linejoin="round"/><path d="M1165.7 701.0 L1166.3 697.2 L1166.9 701.0" fill="none" stroke="#90c088" stroke-width="0.9" opacity="0.8" stroke-linejoin="round"/><path d="M1196.6 701.0 L1197.2 699.2 L1197.8 701.0" fill="none" stroke="#90c088" stroke-width="0.9" opacity="0.8" stroke-linejoin="round"/><path d="M1211.5 701.0 L1212.1 698.4 L1212.7 701.0" fill="none" stroke="#90c088" stroke-width="0.9" opacity="0.8" stroke-linejoin="round"/><path d="M1233.0 701.0 L1233.6 697.8 L1234.2 701.0" fill="none" stroke="#90c088" stroke-width="0.9" opacity="0.8" stroke-linejoin="round"/><path d="M1242.5 701.0 L1243.1 697.7 L1243.7 701.0" fill="none" stroke="#90c088" stroke-width="0.9" opacity="0.8" stroke-linejoin="round"/><path d="M1254.4 701.0 L1255.0 698.8 L1255.6 701.0" fill="none" stroke="#90c088" stroke-width="0.9" opacity="0.8" stroke-linejoin="round"/><path d="M1262.2 701.0 L1262.8 696.9 L1263.4 701.0" fill="none" stroke="#90c088" stroke-width="0.9" opacity="0.8" stroke-linejoin="round"/><path d="M1287.3 701.0 L1287.9 699.2 L1288.5 701.0" fill="none" stroke="#90c088" stroke-width="0.9" opacity="0.8" stroke-linejoin="round"/><path d="M1312.8 701.0 L1313.4 700.0 L1314.0 701.0" fill="none" stroke="#90c088" stroke-width="0.9" opacity="0.8" stroke-linejoin="round"/><path d="M1351.0 701.0 L1351.6 697.6 L1352.2 701.0" fill="none" stroke="#90c088" stroke-width="0.9" opacity="0.8" stroke-linejoin="round"/><path d="M1364.8 701.0 L1365.4 696.1 L1366.0 701.0" fill="none" stroke="#90c088" stroke-width="0.9" opacity="0.8" stroke-linejoin="round"/><path d="M747.6 700.4H1367.0" stroke="#a03030" stroke-width="1" opacity="1"/><path d="M747.6 702.3H1367.0" stroke="#ece8dc" stroke-width="3" opacity="1"/></svg>
</div></body></html>
